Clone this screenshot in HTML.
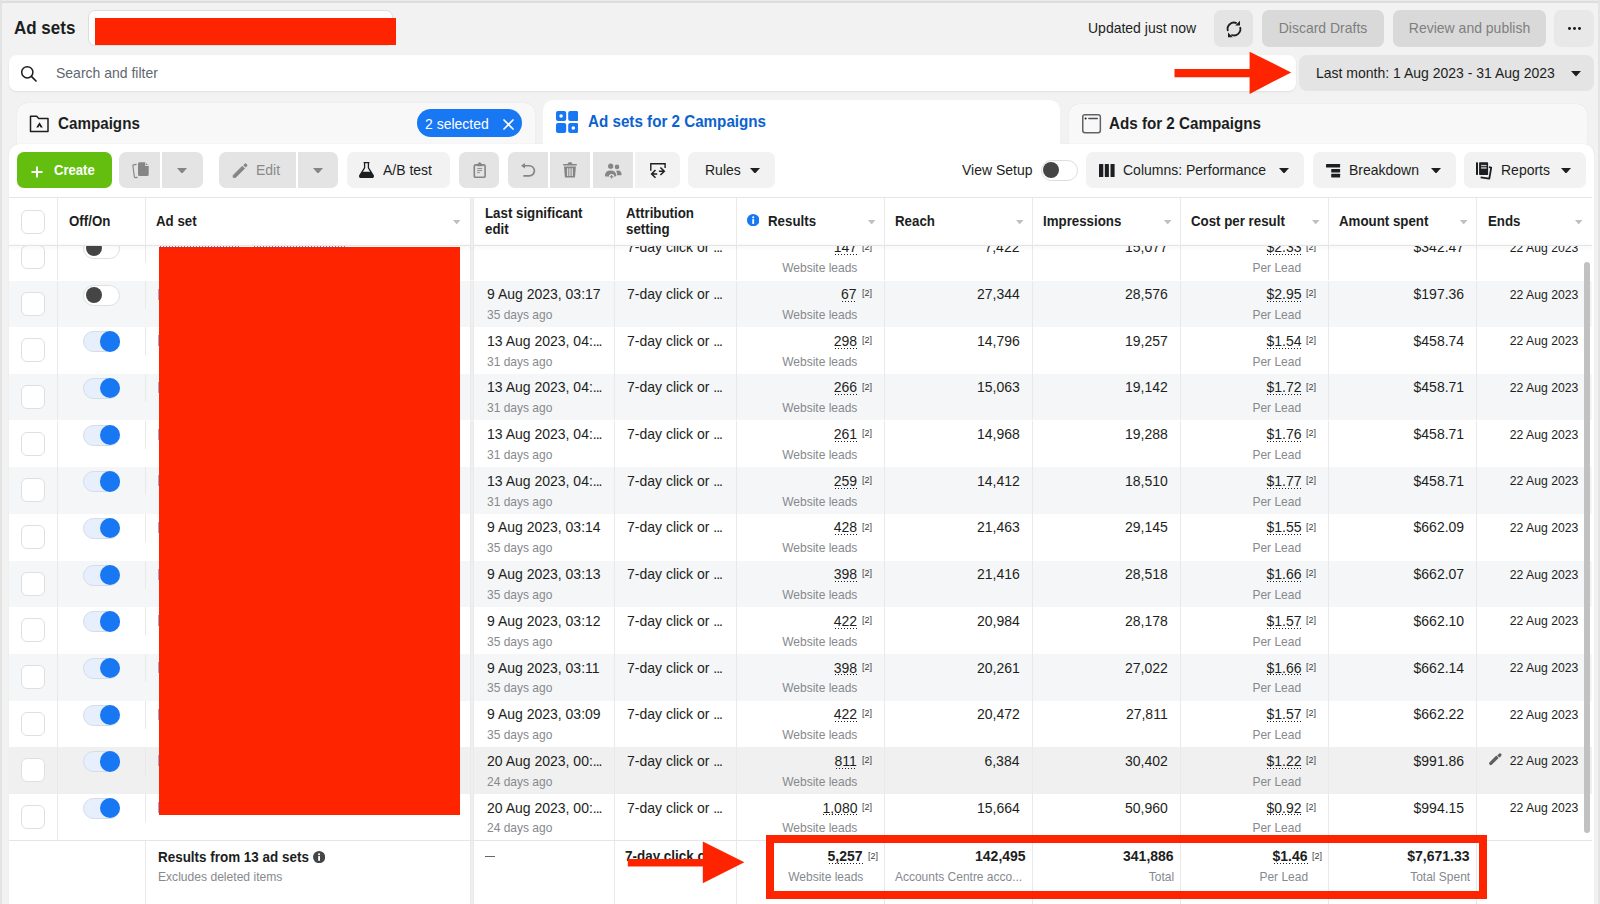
<!DOCTYPE html><html><head><meta charset="utf-8"><style>
*{margin:0;padding:0;box-sizing:border-box}
html,body{width:1600px;height:904px;overflow:hidden}
body{background:#f2f2f2;font-family:"Liberation Sans",sans-serif;position:relative}
.t{position:absolute;white-space:nowrap}
.r{position:absolute;display:block}
</style></head><body>
<div class="r" style="left:0.00px;top:0.00px;width:1600.00px;height:1.00px;background:#ebebeb;"></div>
<div class="r" style="left:0.00px;top:1.00px;width:1600.00px;height:1.60px;background:#dcdede;"></div>
<div class="r" style="left:0.00px;top:0.00px;width:2.00px;height:904.00px;background:#e2e2e2;"></div>
<div class="r" style="left:1598.00px;top:0.00px;width:2.00px;height:904.00px;background:#e4e4e4;"></div>
<div class="t" style="top:15.90px;font-size:19.04px;line-height:23.8px;font-weight:700;color:#1c1e21;transform:scaleX(0.8929);left:14.00px;transform-origin:0 50%;">Ad sets</div>
<div class="r" style="left:88.00px;top:10.00px;width:305.00px;height:36.00px;background:#fff;border:1px solid #dadde1;border-radius:7px;"></div>
<div class="r" style="left:95.00px;top:17.60px;width:301.00px;height:27.20px;background:#ff2400;"></div>
<div class="t" style="top:19.04px;font-size:14.98px;line-height:18.73px;font-weight:400;color:#1c1e21;transform:scaleX(0.9346);left:1087.60px;transform-origin:0 50%;">Updated just now</div>
<div class="r" style="left:1213.60px;top:10.00px;width:39.90px;height:36.60px;background:#e4e4e4;border-radius:7px;"></div>
<svg class="r" style="left:1223.90px;top:18.80px;" width="20" height="20" viewBox="0 0 20 20"><path d="M3.9 12A6.4 6.4 0 0 1 12.7 4.2M16.1 8.1A6.4 6.4 0 0 1 7.3 15.8" fill="none" stroke="#1c1e21" stroke-width="1.8"/><path d="M11.2 6.6H16V1.8z" fill="#1c1e21"/><path d="M4 13.4V18.2H8.8z" fill="#1c1e21"/></svg>
<div class="r" style="left:1262.00px;top:10.00px;width:122.00px;height:36.60px;background:#d9d9d9;border-radius:7px;"></div>
<div class="t" style="top:19.04px;font-size:14.98px;line-height:18.73px;font-weight:400;color:#7f7f7f;transform:scaleX(0.9346);left:1262.00px;width:122px;text-align:center;transform-origin:50% 50%;">Discard Drafts</div>
<div class="r" style="left:1393.00px;top:10.00px;width:153.00px;height:36.60px;background:#d9d9d9;border-radius:7px;"></div>
<div class="t" style="top:19.04px;font-size:14.98px;line-height:18.73px;font-weight:400;color:#7f7f7f;transform:scaleX(0.9346);left:1393.00px;width:153px;text-align:center;transform-origin:50% 50%;">Review and publish</div>
<div class="r" style="left:1554.00px;top:10.00px;width:40.00px;height:36.60px;background:#e8e8e8;border-radius:7px;"></div>
<div class="r" style="left:1567.75px;top:27.05px;width:2.90px;height:2.90px;background:#1c1e21;border-radius:50%;"></div>
<div class="r" style="left:1572.90px;top:27.05px;width:2.90px;height:2.90px;background:#1c1e21;border-radius:50%;"></div>
<div class="r" style="left:1578.05px;top:27.05px;width:2.90px;height:2.90px;background:#1c1e21;border-radius:50%;"></div>
<div class="r" style="left:9.00px;top:55.00px;width:1286.50px;height:36.00px;background:#fff;border-radius:8px;box-shadow:0 1px 2px rgba(0,0,0,0.08);"></div>
<svg class="r" style="left:20.00px;top:64.60px;" width="18" height="18" viewBox="0 0 18 18"><circle cx="7.3" cy="7.3" r="5.6" fill="none" stroke="#1c1e21" stroke-width="1.5"/><path d="M11.4 11.4l4.6 4.6" stroke="#1c1e21" stroke-width="1.7" stroke-linecap="round"/></svg>
<div class="t" style="top:63.54px;font-size:14.98px;line-height:18.73px;font-weight:400;color:#606770;transform:scaleX(0.9346);left:55.50px;transform-origin:0 50%;">Search and filter</div>
<div class="r" style="left:1299.40px;top:55.00px;width:294.60px;height:36.00px;background:#e4e4e4;border-radius:8px;"></div>
<div class="t" style="top:63.54px;font-size:14.98px;line-height:18.73px;font-weight:400;color:#1c1e21;transform:scaleX(0.9346);left:1315.50px;transform-origin:0 50%;">Last month: 1 Aug 2023 - 31 Aug 2023</div>
<svg class="r" style="left:1571.40px;top:71.25px;" width="10" height="5.5" viewBox="0 0 10 5.5"><path d="M0 0H10L5.0 5.5Z" fill="#1c1e21"/></svg>
<svg class="r" style="left:1174.00px;top:51.00px;" width="118" height="43" viewBox="0 0 118 43"><path d="M0.5 18H75.6V0.7L117.2 21.4L75.6 42.9V26.2H0.5Z" fill="#ff2400"/></svg>
<div class="r" style="left:17.00px;top:103.00px;width:518.00px;height:47.00px;background:#f8f8f8;border-radius:10px 10px 0 0;box-shadow:0 0 1px rgba(0,0,0,0.12);"></div>
<svg class="r" style="left:29.00px;top:114.00px;" width="21" height="19" viewBox="0 0 21 19"><path d="M1.5 2.2h6.2l2 2.2h9.3v13H1.5z" fill="none" stroke="#1c1e21" stroke-width="1.5" stroke-linejoin="round"/><path d="M7.2 13.6l3.3-5.4 3.3 5.4h-2.2l-1.1-2-1.1 2z" fill="#1c1e21"/></svg>
<div class="t" style="top:113.96px;font-size:16.72px;line-height:20.9px;font-weight:700;color:#1c1e21;transform:scaleX(0.9091);left:57.50px;transform-origin:0 50%;">Campaigns</div>
<div class="r" style="left:417.00px;top:109.30px;width:105.00px;height:28.10px;background:#1877f2;border-radius:14px;"></div>
<div class="t" style="top:114.74px;font-size:14.98px;line-height:18.73px;font-weight:400;color:#fff;transform:scaleX(0.9346);left:425.00px;transform-origin:0 50%;">2 selected</div>
<svg class="r" style="left:502.80px;top:119.40px;" width="11" height="11" viewBox="0 0 11 11"><path d="M1 1l9 9M10 1l-9 9" stroke="#fff" stroke-width="1.7" stroke-linecap="round"/></svg>
<div class="r" style="left:1068.50px;top:103.50px;width:518.00px;height:46.50px;background:#f8f8f8;border-radius:10px 10px 0 0;box-shadow:0 0 1px rgba(0,0,0,0.12);"></div>
<svg class="r" style="left:1080.50px;top:113.00px;" width="21" height="21" viewBox="0 0 21 21"><rect x="1.75" y="1.85" width="17.6" height="17.8" rx="2.2" fill="none" stroke="#606266" stroke-width="1.5"/><path d="M7.8 5.5h8.6" stroke="#4a4c50" stroke-width="1.3" stroke-linecap="round"/><circle cx="4.6" cy="5.5" r="1.05" fill="#1c1e21"/></svg>
<div class="t" style="top:113.96px;font-size:16.72px;line-height:20.9px;font-weight:700;color:#1c1e21;transform:scaleX(0.9091);left:1109.00px;transform-origin:0 50%;">Ads for 2 Campaigns</div>
<div class="r" style="left:8.50px;top:144.00px;width:1585.50px;height:776.00px;background:#fff;border-radius:10px 10px 0 0;box-shadow:0 0 1px rgba(0,0,0,0.15);"></div>
<div class="r" style="left:542.50px;top:100.00px;width:517.50px;height:60.00px;background:#fff;border-radius:10px 10px 0 0;"></div>
<svg class="r" style="left:555.80px;top:111.00px;" width="22.4" height="22" viewBox="0 0 22.4 22"><rect x="0" y="0" width="10.2" height="10" rx="2" fill="#1877f2"/><rect x="12.2" y="0" width="10.2" height="10" rx="2" fill="#1877f2"/><rect x="0" y="12" width="10.2" height="10" rx="2" fill="#1877f2"/><rect x="12.2" y="12" width="10.2" height="10" rx="2" fill="#1877f2"/><circle cx="5.1" cy="5" r="1.8" fill="#fff"/><circle cx="17.3" cy="17" r="1.8" fill="#fff"/></svg>
<div class="t" style="top:112.16px;font-size:16.72px;line-height:20.9px;font-weight:700;color:#0b62cf;transform:scaleX(0.9091);left:587.50px;transform-origin:0 50%;">Ad sets for 2 Campaigns</div>
<div class="r" style="left:17.00px;top:152.00px;width:94.50px;height:36.00px;background:#63be0f;border-radius:7px;"></div>
<svg class="r" style="left:31.00px;top:165.50px;" width="12" height="12" viewBox="0 0 12 12"><path d="M6 0.5v11M0.5 6h11" stroke="#fff" stroke-width="1.9"/></svg>
<div class="t" style="top:161.36px;font-size:15.06px;line-height:18.83px;font-weight:700;color:#fff;transform:scaleX(0.8696);left:53.50px;transform-origin:0 50%;">Create</div>
<div class="r" style="left:119.30px;top:152.00px;width:40.70px;height:36.00px;background:#e4e4e4;border-radius:7px 0 0 7px;"></div>
<svg class="r" style="left:131.50px;top:162.00px;" width="17" height="17" viewBox="0 0 17 17"><path d="M4.6 2.4L1.6 2.9Q0.8 3.1 0.9 3.9L2.4 14.9Q2.5 15.6 3.3 15.6L5.6 15.4" fill="none" stroke="#858585" stroke-width="1.1"/><path d="M7.6 0.3h5.6l3.5 3.5v8.7a1.6 1.6 0 0 1-1.6 1.6H7.6a1.6 1.6 0 0 1-1.6-1.6V1.9a1.6 1.6 0 0 1 1.6-1.6z" fill="#858585"/><path d="M13.2 0.1v3.8h3.7z" fill="#e4e4e4"/><path d="M13.9 1.2l1.9 1.9h-1.9z" fill="#858585"/></svg>
<div class="r" style="left:162.20px;top:152.00px;width:40.50px;height:36.00px;background:#e4e4e4;border-radius:0 7px 7px 0;"></div>
<svg class="r" style="left:177.40px;top:167.55px;" width="10" height="5.7" viewBox="0 0 10 5.7"><path d="M0 0H10L5.0 5.7Z" fill="#858585"/></svg>
<div class="r" style="left:219.20px;top:152.00px;width:76.50px;height:36.00px;background:#e4e4e4;border-radius:7px 0 0 7px;"></div>
<svg class="r" style="left:231.50px;top:162.50px;" width="16" height="15" viewBox="0 0 16 15"><path d="M1 14.3L1.3 12.2 10.3 3.2 12.6 5.5 3.6 14.5z" fill="#858585" stroke="#858585" stroke-width="0.8" stroke-linejoin="round"/><path d="M11.3 2.2l1.6-1.6a0.8 0.8 0 0 1 1.1 0l1.2 1.2a0.8 0.8 0 0 1 0 1.1l-1.6 1.6z" fill="#858585"/></svg>
<div class="t" style="top:160.94px;font-size:14.98px;line-height:18.73px;font-weight:400;color:#8a8a8a;transform:scaleX(0.9346);left:256.25px;transform-origin:0 50%;">Edit</div>
<div class="r" style="left:297.50px;top:152.00px;width:40.50px;height:36.00px;background:#e4e4e4;border-radius:0 7px 7px 0;"></div>
<svg class="r" style="left:313.10px;top:167.55px;" width="10" height="5.7" viewBox="0 0 10 5.7"><path d="M0 0H10L5.0 5.7Z" fill="#858585"/></svg>
<div class="r" style="left:346.75px;top:152.00px;width:103.50px;height:36.00px;background:#f2f2f2;border-radius:7px;"></div>
<svg class="r" style="left:359.00px;top:162.00px;" width="15" height="16" viewBox="0 0 15 16"><path d="M4.6 0.6h5.8M5.6 0.6v5.2L0.9 13.4a1.5 1.5 0 0 0 1.3 2.2h10.6a1.5 1.5 0 0 0 1.3-2.2L9.4 5.8V0.6" fill="none" stroke="#1c1e21" stroke-width="1.3"/><path d="M3.2 9.8h8.6l2.6 3.9a1.4 1.4 0 0 1-1.2 1.9H1.8a1.4 1.4 0 0 1-1.2-1.9z" fill="#1c1e21"/></svg>
<div class="t" style="top:160.94px;font-size:14.98px;line-height:18.73px;font-weight:400;color:#1c1e21;transform:scaleX(0.9346);left:383.20px;transform-origin:0 50%;">A/B test</div>
<div class="r" style="left:458.80px;top:152.00px;width:39.90px;height:36.00px;background:#e4e4e4;border-radius:7px;"></div>
<svg class="r" style="left:472.50px;top:161.90px;" width="13" height="16" viewBox="0 0 13 16"><rect x="1.3" y="2.9" width="10.8" height="12.4" rx="1.4" fill="none" stroke="#858585" stroke-width="1.6"/><path d="M3.9 4.2V2.6L6.7 0L9.5 2.6V4.2z" fill="#858585"/><path d="M4.2 6.6h5M4.2 8.6h5M4.2 10.6h2.6" stroke="#858585" stroke-width="0.9"/></svg>
<div class="r" style="left:508.00px;top:152.00px;width:39.75px;height:36.00px;background:#e4e4e4;border-radius:7px 0 0 7px;"></div>
<svg class="r" style="left:520.50px;top:161.80px;" width="15" height="16" viewBox="0 0 15 16"><path d="M0 3.75L4 0.9V6.6z" fill="#858585"/><path d="M3.4 3.75H8.35A5.05 5.05 0 0 1 8.35 13.85H2.3" fill="none" stroke="#858585" stroke-width="1.7"/></svg>
<div class="r" style="left:550.00px;top:152.00px;width:40.20px;height:36.00px;background:#e4e4e4;"></div>
<svg class="r" style="left:563.30px;top:162.10px;" width="14" height="16" viewBox="0 0 14 16"><path d="M4.4 2.6Q4.6 0 7 0Q9.4 0 9.6 2.6z" fill="#858585"/><rect x="0" y="2.1" width="13.9" height="1.4" rx="0.6" fill="#858585"/><path d="M1 4.5H12.9L12 15.2Q11.9 15.6 11.5 15.6H2.4Q2 15.6 1.9 15.2z" fill="#858585"/><path d="M4.7 6.2v7.8M6.95 6.2v7.8M9.2 6.2v7.8" stroke="#e4e4e4" stroke-width="1.2"/></svg>
<div class="r" style="left:593.00px;top:152.00px;width:39.80px;height:36.00px;background:#e4e4e4;"></div>
<svg class="r" style="left:604.50px;top:162.50px;" width="17" height="18" viewBox="0 0 17 18"><circle cx="5.7" cy="3.2" r="2.6" fill="#858585"/><circle cx="12" cy="3.9" r="2.3" fill="#858585"/><path d="M-0.1 12.6Q0.2 7.6 5.7 7.5Q11 7.6 11.4 12.6Q11.2 13.6 10 13.6H1.2Q0 13.6 -0.1 12.6z" fill="#858585"/><path d="M11.2 7.7Q12.1 7.4 13.2 7.5Q16.6 7.8 16.6 11.6Q16.5 12.3 15.8 12.3H12.2Q12 9.6 11.2 7.7z" fill="#858585"/><circle cx="6.6" cy="13.8" r="2.7" fill="#e4e4e4"/><path d="M6.6 12v3.6M4.8 13.8h3.6" stroke="#858585" stroke-width="1.1"/></svg>
<div class="r" style="left:635.20px;top:152.00px;width:44.55px;height:36.00px;background:#f2f2f2;border-radius:0 7px 7px 0;"></div>
<svg class="r" style="left:649.50px;top:162.50px;" width="16" height="16" viewBox="0 0 16 16"><path d="M0.8 7.7V0.7H15.1V5.1" fill="none" stroke="#1c1e21" stroke-width="1.4"/><path d="M5.5 7L1.6 11L5.5 14.8M1.8 11H7.2M10.4 4.5L14.3 8.2L10.4 12M14.1 8.2H8.9" fill="none" stroke="#1c1e21" stroke-width="1.5"/></svg>
<div class="r" style="left:688.30px;top:152.00px;width:86.70px;height:36.00px;background:#f2f2f2;border-radius:7px;"></div>
<div class="t" style="top:160.94px;font-size:14.98px;line-height:18.73px;font-weight:400;color:#1c1e21;transform:scaleX(0.9346);left:704.50px;transform-origin:0 50%;">Rules</div>
<svg class="r" style="left:750.10px;top:167.70px;" width="10" height="5.6" viewBox="0 0 10 5.6"><path d="M0 0H10L5.0 5.6Z" fill="#1c1e21"/></svg>
<div class="t" style="top:160.94px;font-size:14.98px;line-height:18.73px;font-weight:400;color:#1c1e21;transform:scaleX(0.9346);left:962.00px;transform-origin:0 50%;">View Setup</div>
<div class="r" style="left:1040.50px;top:159.50px;width:37.50px;height:21.00px;background:#fff;border:1px solid #dadde1;border-radius:11px;"></div>
<div class="r" style="left:1043.00px;top:162.00px;width:16.00px;height:16.00px;background:#454545;border-radius:50%;"></div>
<div class="r" style="left:1086.30px;top:152.00px;width:217.40px;height:36.00px;background:#f2f2f2;border-radius:7px;"></div>
<svg class="r" style="left:1098.60px;top:163.80px;" width="16" height="13" viewBox="0 0 16 13"><rect x="0" y="0" width="4.3" height="13" rx="0.5" fill="#1c1e21"/><rect x="5.8" y="0" width="4.1" height="13" rx="0.5" fill="#1c1e21"/><rect x="11.5" y="0" width="4.1" height="13" rx="0.5" fill="#1c1e21"/></svg>
<div class="t" style="top:160.94px;font-size:14.98px;line-height:18.73px;font-weight:400;color:#1c1e21;transform:scaleX(0.9346);left:1123.10px;transform-origin:0 50%;">Columns: Performance</div>
<svg class="r" style="left:1279.40px;top:167.70px;" width="10" height="5.6" viewBox="0 0 10 5.6"><path d="M0 0H10L5.0 5.6Z" fill="#1c1e21"/></svg>
<div class="r" style="left:1313.00px;top:152.00px;width:142.50px;height:36.00px;background:#f2f2f2;border-radius:7px;"></div>
<svg class="r" style="left:1325.80px;top:163.50px;" width="15" height="14" viewBox="0 0 15 14"><rect x="0" y="0" width="14.1" height="3.4" rx="0.4" fill="#1c1e21"/><rect x="5.2" y="5.1" width="8.9" height="3.3" rx="0.4" fill="#1c1e21"/><rect x="5.2" y="9.8" width="8.9" height="3.7" rx="0.4" fill="#1c1e21"/></svg>
<div class="t" style="top:160.94px;font-size:14.98px;line-height:18.73px;font-weight:400;color:#1c1e21;transform:scaleX(0.9346);left:1349.20px;transform-origin:0 50%;">Breakdown</div>
<svg class="r" style="left:1430.70px;top:167.70px;" width="10" height="5.6" viewBox="0 0 10 5.6"><path d="M0 0H10L5.0 5.6Z" fill="#1c1e21"/></svg>
<div class="r" style="left:1464.30px;top:152.00px;width:121.50px;height:36.00px;background:#f2f2f2;border-radius:7px;"></div>
<svg class="r" style="left:1476.00px;top:162.00px;" width="17" height="18" viewBox="0 0 17 18"><rect x="0" y="0.3" width="2" height="12.6" rx="0.6" fill="#1c1e21"/><rect x="3.1" y="0.3" width="9" height="12.6" rx="0.6" fill="#1c1e21"/><rect x="5" y="2.9" width="5.6" height="1.3" fill="#c4c4c4"/><rect x="5" y="5.1" width="5.6" height="1.7" fill="#b0b0b0"/><path d="M12.9 5.2L15.2 5.6L13.3 16.6L4.6 15.3" fill="none" stroke="#1c1e21" stroke-width="1.8" stroke-linejoin="round"/></svg>
<div class="t" style="top:160.94px;font-size:14.98px;line-height:18.73px;font-weight:400;color:#1c1e21;transform:scaleX(0.9346);left:1500.75px;transform-origin:0 50%;">Reports</div>
<svg class="r" style="left:1561.30px;top:167.70px;" width="10" height="5.6" viewBox="0 0 10 5.6"><path d="M0 0H10L5.0 5.6Z" fill="#1c1e21"/></svg>
<div class="r" style="left:56.80px;top:233.83px;width:1.00px;height:46.67px;background:#e9e9ea;"></div>
<div class="r" style="left:469.70px;top:233.83px;width:1.00px;height:46.67px;background:#e9e9ea;"></div>
<div class="r" style="left:473.30px;top:233.83px;width:1.00px;height:46.67px;background:#e9e9ea;"></div>
<div class="r" style="left:614.00px;top:233.83px;width:1.00px;height:46.67px;background:#e9e9ea;"></div>
<div class="r" style="left:736.00px;top:233.83px;width:1.00px;height:46.67px;background:#e9e9ea;"></div>
<div class="r" style="left:883.80px;top:233.83px;width:1.00px;height:46.67px;background:#e9e9ea;"></div>
<div class="r" style="left:1032.00px;top:233.83px;width:1.00px;height:46.67px;background:#e9e9ea;"></div>
<div class="r" style="left:1180.00px;top:233.83px;width:1.00px;height:46.67px;background:#e9e9ea;"></div>
<div class="r" style="left:1328.10px;top:233.83px;width:1.00px;height:46.67px;background:#e9e9ea;"></div>
<div class="r" style="left:1475.90px;top:233.83px;width:1.00px;height:46.67px;background:#e9e9ea;"></div>
<div class="r" style="left:144.80px;top:233.83px;width:1.00px;height:28.00px;background:#e9e9ea;"></div>
<div class="r" style="left:20.70px;top:245.03px;width:24.10px;height:24.00px;background:#fff;border:1px solid #dddfe2;border-radius:6px;"></div>
<div class="r" style="left:83.00px;top:237.83px;width:36.50px;height:21.00px;background:#fff;border:1px solid #dddfe2;border-radius:11px;"></div>
<div class="r" style="left:85.60px;top:240.23px;width:16.20px;height:16.20px;background:#454545;border-radius:50%;"></div>
<div class="t" style="top:238.47px;font-size:14.98px;line-height:18.73px;font-weight:400;color:#1c1e21;transform:scaleX(0.9346);left:626.80px;transform-origin:0 50%;">7-day click or <span style="letter-spacing:-1.1px">...</span></div>
<div class="t" style="top:238.47px;font-size:14.98px;line-height:18.73px;font-weight:400;color:#1c1e21;transform:scaleX(0.9346);right:743.00px;text-align:right;transform-origin:100% 50%;">147</div>
<div class="r" style="left:833.64px;top:254.43px;width:23.36px;height:1.40px;background:transparent;background-image:radial-gradient(circle,#1c1e21 0.75px,transparent 0.95px);background-size:3px 1.4px;background-repeat:repeat-x;"></div>
<div class="t" style="top:240.67px;font-size:9.63px;line-height:12.04px;font-weight:400;color:#3a3b3e;transform:scaleX(0.9346);left:862.00px;transform-origin:0 50%;">[2]</div>
<div class="t" style="top:260.16px;font-size:12.84px;line-height:16.05px;font-weight:400;color:#86898d;transform:scaleX(0.9346);right:742.60px;text-align:right;transform-origin:100% 50%;">Website leads</div>
<div class="t" style="top:238.47px;font-size:14.98px;line-height:18.73px;font-weight:400;color:#1c1e21;transform:scaleX(0.9346);right:580.50px;text-align:right;transform-origin:100% 50%;">7,422</div>
<div class="t" style="top:238.47px;font-size:14.98px;line-height:18.73px;font-weight:400;color:#1c1e21;transform:scaleX(0.9346);right:432.40px;text-align:right;transform-origin:100% 50%;">15,077</div>
<div class="t" style="top:238.47px;font-size:14.98px;line-height:18.73px;font-weight:400;color:#1c1e21;transform:scaleX(0.9346);right:298.70px;text-align:right;transform-origin:100% 50%;">$2.33</div>
<div class="r" style="left:1266.27px;top:254.43px;width:35.03px;height:1.40px;background:transparent;background-image:radial-gradient(circle,#1c1e21 0.75px,transparent 0.95px);background-size:3px 1.4px;background-repeat:repeat-x;"></div>
<div class="t" style="top:240.67px;font-size:9.63px;line-height:12.04px;font-weight:400;color:#3a3b3e;transform:scaleX(0.9346);left:1306.30px;transform-origin:0 50%;">[2]</div>
<div class="t" style="top:260.16px;font-size:12.84px;line-height:16.05px;font-weight:400;color:#86898d;transform:scaleX(0.9346);right:298.70px;text-align:right;transform-origin:100% 50%;">Per Lead</div>
<div class="t" style="top:238.47px;font-size:14.98px;line-height:18.73px;font-weight:400;color:#1c1e21;transform:scaleX(0.9346);right:136.00px;text-align:right;transform-origin:100% 50%;">$342.47</div>
<div class="t" style="top:239.85px;font-size:13.05px;line-height:16.32px;font-weight:400;color:#1c1e21;transform:scaleX(0.9346);right:22.00px;text-align:right;transform-origin:100% 50%;">22 Aug 2023</div>
<div class="r" style="left:8.50px;top:280.50px;width:1583.50px;height:46.67px;background:#f5f6f7;"></div>
<div class="r" style="left:56.80px;top:280.50px;width:1.00px;height:46.67px;background:#e9e9ea;"></div>
<div class="r" style="left:469.70px;top:280.50px;width:1.00px;height:46.67px;background:#e9e9ea;"></div>
<div class="r" style="left:473.30px;top:280.50px;width:1.00px;height:46.67px;background:#e9e9ea;"></div>
<div class="r" style="left:614.00px;top:280.50px;width:1.00px;height:46.67px;background:#e9e9ea;"></div>
<div class="r" style="left:736.00px;top:280.50px;width:1.00px;height:46.67px;background:#e9e9ea;"></div>
<div class="r" style="left:883.80px;top:280.50px;width:1.00px;height:46.67px;background:#e9e9ea;"></div>
<div class="r" style="left:1032.00px;top:280.50px;width:1.00px;height:46.67px;background:#e9e9ea;"></div>
<div class="r" style="left:1180.00px;top:280.50px;width:1.00px;height:46.67px;background:#e9e9ea;"></div>
<div class="r" style="left:1328.10px;top:280.50px;width:1.00px;height:46.67px;background:#e9e9ea;"></div>
<div class="r" style="left:1475.90px;top:280.50px;width:1.00px;height:46.67px;background:#e9e9ea;"></div>
<div class="r" style="left:144.80px;top:280.50px;width:1.00px;height:28.00px;background:#e9e9ea;"></div>
<div class="r" style="left:20.70px;top:291.70px;width:24.10px;height:24.00px;background:#fff;border:1px solid #dddfe2;border-radius:6px;"></div>
<div class="r" style="left:83.00px;top:284.50px;width:36.50px;height:21.00px;background:#fff;border:1px solid #dddfe2;border-radius:11px;"></div>
<div class="r" style="left:85.60px;top:286.90px;width:16.20px;height:16.20px;background:#454545;border-radius:50%;"></div>
<div class="t" style="top:285.14px;font-size:14.98px;line-height:18.73px;font-weight:400;color:#1c1e21;transform:scaleX(0.9346);left:486.50px;transform-origin:0 50%;">9 Aug 2023, 03:17</div>
<div class="t" style="top:306.83px;font-size:12.84px;line-height:16.05px;font-weight:400;color:#86898d;transform:scaleX(0.9346);left:486.50px;transform-origin:0 50%;">35 days ago</div>
<div class="t" style="top:285.14px;font-size:14.98px;line-height:18.73px;font-weight:400;color:#1c1e21;transform:scaleX(0.9346);left:626.80px;transform-origin:0 50%;">7-day click or <span style="letter-spacing:-1.1px">...</span></div>
<div class="t" style="top:285.14px;font-size:14.98px;line-height:18.73px;font-weight:400;color:#1c1e21;transform:scaleX(0.9346);right:743.00px;text-align:right;transform-origin:100% 50%;">67</div>
<div class="r" style="left:841.43px;top:301.10px;width:15.57px;height:1.40px;background:transparent;background-image:radial-gradient(circle,#1c1e21 0.75px,transparent 0.95px);background-size:3px 1.4px;background-repeat:repeat-x;"></div>
<div class="t" style="top:287.34px;font-size:9.63px;line-height:12.04px;font-weight:400;color:#3a3b3e;transform:scaleX(0.9346);left:862.00px;transform-origin:0 50%;">[2]</div>
<div class="t" style="top:306.83px;font-size:12.84px;line-height:16.05px;font-weight:400;color:#86898d;transform:scaleX(0.9346);right:742.60px;text-align:right;transform-origin:100% 50%;">Website leads</div>
<div class="t" style="top:285.14px;font-size:14.98px;line-height:18.73px;font-weight:400;color:#1c1e21;transform:scaleX(0.9346);right:580.50px;text-align:right;transform-origin:100% 50%;">27,344</div>
<div class="t" style="top:285.14px;font-size:14.98px;line-height:18.73px;font-weight:400;color:#1c1e21;transform:scaleX(0.9346);right:432.40px;text-align:right;transform-origin:100% 50%;">28,576</div>
<div class="t" style="top:285.14px;font-size:14.98px;line-height:18.73px;font-weight:400;color:#1c1e21;transform:scaleX(0.9346);right:298.70px;text-align:right;transform-origin:100% 50%;">$2.95</div>
<div class="r" style="left:1266.27px;top:301.10px;width:35.03px;height:1.40px;background:transparent;background-image:radial-gradient(circle,#1c1e21 0.75px,transparent 0.95px);background-size:3px 1.4px;background-repeat:repeat-x;"></div>
<div class="t" style="top:287.34px;font-size:9.63px;line-height:12.04px;font-weight:400;color:#3a3b3e;transform:scaleX(0.9346);left:1306.30px;transform-origin:0 50%;">[2]</div>
<div class="t" style="top:306.83px;font-size:12.84px;line-height:16.05px;font-weight:400;color:#86898d;transform:scaleX(0.9346);right:298.70px;text-align:right;transform-origin:100% 50%;">Per Lead</div>
<div class="t" style="top:285.14px;font-size:14.98px;line-height:18.73px;font-weight:400;color:#1c1e21;transform:scaleX(0.9346);right:136.00px;text-align:right;transform-origin:100% 50%;">$197.36</div>
<div class="t" style="top:286.52px;font-size:13.05px;line-height:16.32px;font-weight:400;color:#1c1e21;transform:scaleX(0.9346);right:22.00px;text-align:right;transform-origin:100% 50%;">22 Aug 2023</div>
<div class="r" style="left:56.80px;top:327.17px;width:1.00px;height:46.67px;background:#e9e9ea;"></div>
<div class="r" style="left:469.70px;top:327.17px;width:1.00px;height:46.67px;background:#e9e9ea;"></div>
<div class="r" style="left:473.30px;top:327.17px;width:1.00px;height:46.67px;background:#e9e9ea;"></div>
<div class="r" style="left:614.00px;top:327.17px;width:1.00px;height:46.67px;background:#e9e9ea;"></div>
<div class="r" style="left:736.00px;top:327.17px;width:1.00px;height:46.67px;background:#e9e9ea;"></div>
<div class="r" style="left:883.80px;top:327.17px;width:1.00px;height:46.67px;background:#e9e9ea;"></div>
<div class="r" style="left:1032.00px;top:327.17px;width:1.00px;height:46.67px;background:#e9e9ea;"></div>
<div class="r" style="left:1180.00px;top:327.17px;width:1.00px;height:46.67px;background:#e9e9ea;"></div>
<div class="r" style="left:1328.10px;top:327.17px;width:1.00px;height:46.67px;background:#e9e9ea;"></div>
<div class="r" style="left:1475.90px;top:327.17px;width:1.00px;height:46.67px;background:#e9e9ea;"></div>
<div class="r" style="left:144.80px;top:327.17px;width:1.00px;height:28.00px;background:#e9e9ea;"></div>
<div class="r" style="left:20.70px;top:338.37px;width:24.10px;height:24.00px;background:#fff;border:1px solid #dddfe2;border-radius:6px;"></div>
<div class="r" style="left:83.00px;top:331.17px;width:36.50px;height:21.00px;background:#e7effc;border:1px solid #d4dcea;border-radius:11px;"></div>
<div class="r" style="left:99.60px;top:331.37px;width:20.40px;height:20.40px;background:#1877f2;border-radius:50%;"></div>
<div class="t" style="top:331.81px;font-size:14.98px;line-height:18.73px;font-weight:400;color:#1c1e21;transform:scaleX(0.9346);left:486.50px;transform-origin:0 50%;">13 Aug 2023, 04:<span style="letter-spacing:-1.1px">...</span></div>
<div class="t" style="top:353.50px;font-size:12.84px;line-height:16.05px;font-weight:400;color:#86898d;transform:scaleX(0.9346);left:486.50px;transform-origin:0 50%;">31 days ago</div>
<div class="t" style="top:331.81px;font-size:14.98px;line-height:18.73px;font-weight:400;color:#1c1e21;transform:scaleX(0.9346);left:626.80px;transform-origin:0 50%;">7-day click or <span style="letter-spacing:-1.1px">...</span></div>
<div class="t" style="top:331.81px;font-size:14.98px;line-height:18.73px;font-weight:400;color:#1c1e21;transform:scaleX(0.9346);right:743.00px;text-align:right;transform-origin:100% 50%;">298</div>
<div class="r" style="left:833.64px;top:347.77px;width:23.36px;height:1.40px;background:transparent;background-image:radial-gradient(circle,#1c1e21 0.75px,transparent 0.95px);background-size:3px 1.4px;background-repeat:repeat-x;"></div>
<div class="t" style="top:334.01px;font-size:9.63px;line-height:12.04px;font-weight:400;color:#3a3b3e;transform:scaleX(0.9346);left:862.00px;transform-origin:0 50%;">[2]</div>
<div class="t" style="top:353.50px;font-size:12.84px;line-height:16.05px;font-weight:400;color:#86898d;transform:scaleX(0.9346);right:742.60px;text-align:right;transform-origin:100% 50%;">Website leads</div>
<div class="t" style="top:331.81px;font-size:14.98px;line-height:18.73px;font-weight:400;color:#1c1e21;transform:scaleX(0.9346);right:580.50px;text-align:right;transform-origin:100% 50%;">14,796</div>
<div class="t" style="top:331.81px;font-size:14.98px;line-height:18.73px;font-weight:400;color:#1c1e21;transform:scaleX(0.9346);right:432.40px;text-align:right;transform-origin:100% 50%;">19,257</div>
<div class="t" style="top:331.81px;font-size:14.98px;line-height:18.73px;font-weight:400;color:#1c1e21;transform:scaleX(0.9346);right:298.70px;text-align:right;transform-origin:100% 50%;">$1.54</div>
<div class="r" style="left:1266.27px;top:347.77px;width:35.03px;height:1.40px;background:transparent;background-image:radial-gradient(circle,#1c1e21 0.75px,transparent 0.95px);background-size:3px 1.4px;background-repeat:repeat-x;"></div>
<div class="t" style="top:334.01px;font-size:9.63px;line-height:12.04px;font-weight:400;color:#3a3b3e;transform:scaleX(0.9346);left:1306.30px;transform-origin:0 50%;">[2]</div>
<div class="t" style="top:353.50px;font-size:12.84px;line-height:16.05px;font-weight:400;color:#86898d;transform:scaleX(0.9346);right:298.70px;text-align:right;transform-origin:100% 50%;">Per Lead</div>
<div class="t" style="top:331.81px;font-size:14.98px;line-height:18.73px;font-weight:400;color:#1c1e21;transform:scaleX(0.9346);right:136.00px;text-align:right;transform-origin:100% 50%;">$458.74</div>
<div class="t" style="top:333.19px;font-size:13.05px;line-height:16.32px;font-weight:400;color:#1c1e21;transform:scaleX(0.9346);right:22.00px;text-align:right;transform-origin:100% 50%;">22 Aug 2023</div>
<div class="r" style="left:8.50px;top:373.84px;width:1583.50px;height:46.67px;background:#f5f6f7;"></div>
<div class="r" style="left:56.80px;top:373.84px;width:1.00px;height:46.67px;background:#e9e9ea;"></div>
<div class="r" style="left:469.70px;top:373.84px;width:1.00px;height:46.67px;background:#e9e9ea;"></div>
<div class="r" style="left:473.30px;top:373.84px;width:1.00px;height:46.67px;background:#e9e9ea;"></div>
<div class="r" style="left:614.00px;top:373.84px;width:1.00px;height:46.67px;background:#e9e9ea;"></div>
<div class="r" style="left:736.00px;top:373.84px;width:1.00px;height:46.67px;background:#e9e9ea;"></div>
<div class="r" style="left:883.80px;top:373.84px;width:1.00px;height:46.67px;background:#e9e9ea;"></div>
<div class="r" style="left:1032.00px;top:373.84px;width:1.00px;height:46.67px;background:#e9e9ea;"></div>
<div class="r" style="left:1180.00px;top:373.84px;width:1.00px;height:46.67px;background:#e9e9ea;"></div>
<div class="r" style="left:1328.10px;top:373.84px;width:1.00px;height:46.67px;background:#e9e9ea;"></div>
<div class="r" style="left:1475.90px;top:373.84px;width:1.00px;height:46.67px;background:#e9e9ea;"></div>
<div class="r" style="left:144.80px;top:373.84px;width:1.00px;height:28.00px;background:#e9e9ea;"></div>
<div class="r" style="left:20.70px;top:385.04px;width:24.10px;height:24.00px;background:#fff;border:1px solid #dddfe2;border-radius:6px;"></div>
<div class="r" style="left:83.00px;top:377.84px;width:36.50px;height:21.00px;background:#e7effc;border:1px solid #d4dcea;border-radius:11px;"></div>
<div class="r" style="left:99.60px;top:378.04px;width:20.40px;height:20.40px;background:#1877f2;border-radius:50%;"></div>
<div class="t" style="top:378.48px;font-size:14.98px;line-height:18.73px;font-weight:400;color:#1c1e21;transform:scaleX(0.9346);left:486.50px;transform-origin:0 50%;">13 Aug 2023, 04:<span style="letter-spacing:-1.1px">...</span></div>
<div class="t" style="top:400.17px;font-size:12.84px;line-height:16.05px;font-weight:400;color:#86898d;transform:scaleX(0.9346);left:486.50px;transform-origin:0 50%;">31 days ago</div>
<div class="t" style="top:378.48px;font-size:14.98px;line-height:18.73px;font-weight:400;color:#1c1e21;transform:scaleX(0.9346);left:626.80px;transform-origin:0 50%;">7-day click or <span style="letter-spacing:-1.1px">...</span></div>
<div class="t" style="top:378.48px;font-size:14.98px;line-height:18.73px;font-weight:400;color:#1c1e21;transform:scaleX(0.9346);right:743.00px;text-align:right;transform-origin:100% 50%;">266</div>
<div class="r" style="left:833.64px;top:394.44px;width:23.36px;height:1.40px;background:transparent;background-image:radial-gradient(circle,#1c1e21 0.75px,transparent 0.95px);background-size:3px 1.4px;background-repeat:repeat-x;"></div>
<div class="t" style="top:380.68px;font-size:9.63px;line-height:12.04px;font-weight:400;color:#3a3b3e;transform:scaleX(0.9346);left:862.00px;transform-origin:0 50%;">[2]</div>
<div class="t" style="top:400.17px;font-size:12.84px;line-height:16.05px;font-weight:400;color:#86898d;transform:scaleX(0.9346);right:742.60px;text-align:right;transform-origin:100% 50%;">Website leads</div>
<div class="t" style="top:378.48px;font-size:14.98px;line-height:18.73px;font-weight:400;color:#1c1e21;transform:scaleX(0.9346);right:580.50px;text-align:right;transform-origin:100% 50%;">15,063</div>
<div class="t" style="top:378.48px;font-size:14.98px;line-height:18.73px;font-weight:400;color:#1c1e21;transform:scaleX(0.9346);right:432.40px;text-align:right;transform-origin:100% 50%;">19,142</div>
<div class="t" style="top:378.48px;font-size:14.98px;line-height:18.73px;font-weight:400;color:#1c1e21;transform:scaleX(0.9346);right:298.70px;text-align:right;transform-origin:100% 50%;">$1.72</div>
<div class="r" style="left:1266.27px;top:394.44px;width:35.03px;height:1.40px;background:transparent;background-image:radial-gradient(circle,#1c1e21 0.75px,transparent 0.95px);background-size:3px 1.4px;background-repeat:repeat-x;"></div>
<div class="t" style="top:380.68px;font-size:9.63px;line-height:12.04px;font-weight:400;color:#3a3b3e;transform:scaleX(0.9346);left:1306.30px;transform-origin:0 50%;">[2]</div>
<div class="t" style="top:400.17px;font-size:12.84px;line-height:16.05px;font-weight:400;color:#86898d;transform:scaleX(0.9346);right:298.70px;text-align:right;transform-origin:100% 50%;">Per Lead</div>
<div class="t" style="top:378.48px;font-size:14.98px;line-height:18.73px;font-weight:400;color:#1c1e21;transform:scaleX(0.9346);right:136.00px;text-align:right;transform-origin:100% 50%;">$458.71</div>
<div class="t" style="top:379.86px;font-size:13.05px;line-height:16.32px;font-weight:400;color:#1c1e21;transform:scaleX(0.9346);right:22.00px;text-align:right;transform-origin:100% 50%;">22 Aug 2023</div>
<div class="r" style="left:56.80px;top:420.51px;width:1.00px;height:46.67px;background:#e9e9ea;"></div>
<div class="r" style="left:469.70px;top:420.51px;width:1.00px;height:46.67px;background:#e9e9ea;"></div>
<div class="r" style="left:473.30px;top:420.51px;width:1.00px;height:46.67px;background:#e9e9ea;"></div>
<div class="r" style="left:614.00px;top:420.51px;width:1.00px;height:46.67px;background:#e9e9ea;"></div>
<div class="r" style="left:736.00px;top:420.51px;width:1.00px;height:46.67px;background:#e9e9ea;"></div>
<div class="r" style="left:883.80px;top:420.51px;width:1.00px;height:46.67px;background:#e9e9ea;"></div>
<div class="r" style="left:1032.00px;top:420.51px;width:1.00px;height:46.67px;background:#e9e9ea;"></div>
<div class="r" style="left:1180.00px;top:420.51px;width:1.00px;height:46.67px;background:#e9e9ea;"></div>
<div class="r" style="left:1328.10px;top:420.51px;width:1.00px;height:46.67px;background:#e9e9ea;"></div>
<div class="r" style="left:1475.90px;top:420.51px;width:1.00px;height:46.67px;background:#e9e9ea;"></div>
<div class="r" style="left:144.80px;top:420.51px;width:1.00px;height:28.00px;background:#e9e9ea;"></div>
<div class="r" style="left:20.70px;top:431.71px;width:24.10px;height:24.00px;background:#fff;border:1px solid #dddfe2;border-radius:6px;"></div>
<div class="r" style="left:83.00px;top:424.51px;width:36.50px;height:21.00px;background:#e7effc;border:1px solid #d4dcea;border-radius:11px;"></div>
<div class="r" style="left:99.60px;top:424.71px;width:20.40px;height:20.40px;background:#1877f2;border-radius:50%;"></div>
<div class="t" style="top:425.15px;font-size:14.98px;line-height:18.73px;font-weight:400;color:#1c1e21;transform:scaleX(0.9346);left:486.50px;transform-origin:0 50%;">13 Aug 2023, 04:<span style="letter-spacing:-1.1px">...</span></div>
<div class="t" style="top:446.84px;font-size:12.84px;line-height:16.05px;font-weight:400;color:#86898d;transform:scaleX(0.9346);left:486.50px;transform-origin:0 50%;">31 days ago</div>
<div class="t" style="top:425.15px;font-size:14.98px;line-height:18.73px;font-weight:400;color:#1c1e21;transform:scaleX(0.9346);left:626.80px;transform-origin:0 50%;">7-day click or <span style="letter-spacing:-1.1px">...</span></div>
<div class="t" style="top:425.15px;font-size:14.98px;line-height:18.73px;font-weight:400;color:#1c1e21;transform:scaleX(0.9346);right:743.00px;text-align:right;transform-origin:100% 50%;">261</div>
<div class="r" style="left:833.64px;top:441.11px;width:23.36px;height:1.40px;background:transparent;background-image:radial-gradient(circle,#1c1e21 0.75px,transparent 0.95px);background-size:3px 1.4px;background-repeat:repeat-x;"></div>
<div class="t" style="top:427.35px;font-size:9.63px;line-height:12.04px;font-weight:400;color:#3a3b3e;transform:scaleX(0.9346);left:862.00px;transform-origin:0 50%;">[2]</div>
<div class="t" style="top:446.84px;font-size:12.84px;line-height:16.05px;font-weight:400;color:#86898d;transform:scaleX(0.9346);right:742.60px;text-align:right;transform-origin:100% 50%;">Website leads</div>
<div class="t" style="top:425.15px;font-size:14.98px;line-height:18.73px;font-weight:400;color:#1c1e21;transform:scaleX(0.9346);right:580.50px;text-align:right;transform-origin:100% 50%;">14,968</div>
<div class="t" style="top:425.15px;font-size:14.98px;line-height:18.73px;font-weight:400;color:#1c1e21;transform:scaleX(0.9346);right:432.40px;text-align:right;transform-origin:100% 50%;">19,288</div>
<div class="t" style="top:425.15px;font-size:14.98px;line-height:18.73px;font-weight:400;color:#1c1e21;transform:scaleX(0.9346);right:298.70px;text-align:right;transform-origin:100% 50%;">$1.76</div>
<div class="r" style="left:1266.27px;top:441.11px;width:35.03px;height:1.40px;background:transparent;background-image:radial-gradient(circle,#1c1e21 0.75px,transparent 0.95px);background-size:3px 1.4px;background-repeat:repeat-x;"></div>
<div class="t" style="top:427.35px;font-size:9.63px;line-height:12.04px;font-weight:400;color:#3a3b3e;transform:scaleX(0.9346);left:1306.30px;transform-origin:0 50%;">[2]</div>
<div class="t" style="top:446.84px;font-size:12.84px;line-height:16.05px;font-weight:400;color:#86898d;transform:scaleX(0.9346);right:298.70px;text-align:right;transform-origin:100% 50%;">Per Lead</div>
<div class="t" style="top:425.15px;font-size:14.98px;line-height:18.73px;font-weight:400;color:#1c1e21;transform:scaleX(0.9346);right:136.00px;text-align:right;transform-origin:100% 50%;">$458.71</div>
<div class="t" style="top:426.53px;font-size:13.05px;line-height:16.32px;font-weight:400;color:#1c1e21;transform:scaleX(0.9346);right:22.00px;text-align:right;transform-origin:100% 50%;">22 Aug 2023</div>
<div class="r" style="left:8.50px;top:467.18px;width:1583.50px;height:46.67px;background:#f5f6f7;"></div>
<div class="r" style="left:56.80px;top:467.18px;width:1.00px;height:46.67px;background:#e9e9ea;"></div>
<div class="r" style="left:469.70px;top:467.18px;width:1.00px;height:46.67px;background:#e9e9ea;"></div>
<div class="r" style="left:473.30px;top:467.18px;width:1.00px;height:46.67px;background:#e9e9ea;"></div>
<div class="r" style="left:614.00px;top:467.18px;width:1.00px;height:46.67px;background:#e9e9ea;"></div>
<div class="r" style="left:736.00px;top:467.18px;width:1.00px;height:46.67px;background:#e9e9ea;"></div>
<div class="r" style="left:883.80px;top:467.18px;width:1.00px;height:46.67px;background:#e9e9ea;"></div>
<div class="r" style="left:1032.00px;top:467.18px;width:1.00px;height:46.67px;background:#e9e9ea;"></div>
<div class="r" style="left:1180.00px;top:467.18px;width:1.00px;height:46.67px;background:#e9e9ea;"></div>
<div class="r" style="left:1328.10px;top:467.18px;width:1.00px;height:46.67px;background:#e9e9ea;"></div>
<div class="r" style="left:1475.90px;top:467.18px;width:1.00px;height:46.67px;background:#e9e9ea;"></div>
<div class="r" style="left:144.80px;top:467.18px;width:1.00px;height:28.00px;background:#e9e9ea;"></div>
<div class="r" style="left:20.70px;top:478.38px;width:24.10px;height:24.00px;background:#fff;border:1px solid #dddfe2;border-radius:6px;"></div>
<div class="r" style="left:83.00px;top:471.18px;width:36.50px;height:21.00px;background:#e7effc;border:1px solid #d4dcea;border-radius:11px;"></div>
<div class="r" style="left:99.60px;top:471.38px;width:20.40px;height:20.40px;background:#1877f2;border-radius:50%;"></div>
<div class="t" style="top:471.82px;font-size:14.98px;line-height:18.73px;font-weight:400;color:#1c1e21;transform:scaleX(0.9346);left:486.50px;transform-origin:0 50%;">13 Aug 2023, 04:<span style="letter-spacing:-1.1px">...</span></div>
<div class="t" style="top:493.51px;font-size:12.84px;line-height:16.05px;font-weight:400;color:#86898d;transform:scaleX(0.9346);left:486.50px;transform-origin:0 50%;">31 days ago</div>
<div class="t" style="top:471.82px;font-size:14.98px;line-height:18.73px;font-weight:400;color:#1c1e21;transform:scaleX(0.9346);left:626.80px;transform-origin:0 50%;">7-day click or <span style="letter-spacing:-1.1px">...</span></div>
<div class="t" style="top:471.82px;font-size:14.98px;line-height:18.73px;font-weight:400;color:#1c1e21;transform:scaleX(0.9346);right:743.00px;text-align:right;transform-origin:100% 50%;">259</div>
<div class="r" style="left:833.64px;top:487.78px;width:23.36px;height:1.40px;background:transparent;background-image:radial-gradient(circle,#1c1e21 0.75px,transparent 0.95px);background-size:3px 1.4px;background-repeat:repeat-x;"></div>
<div class="t" style="top:474.02px;font-size:9.63px;line-height:12.04px;font-weight:400;color:#3a3b3e;transform:scaleX(0.9346);left:862.00px;transform-origin:0 50%;">[2]</div>
<div class="t" style="top:493.51px;font-size:12.84px;line-height:16.05px;font-weight:400;color:#86898d;transform:scaleX(0.9346);right:742.60px;text-align:right;transform-origin:100% 50%;">Website leads</div>
<div class="t" style="top:471.82px;font-size:14.98px;line-height:18.73px;font-weight:400;color:#1c1e21;transform:scaleX(0.9346);right:580.50px;text-align:right;transform-origin:100% 50%;">14,412</div>
<div class="t" style="top:471.82px;font-size:14.98px;line-height:18.73px;font-weight:400;color:#1c1e21;transform:scaleX(0.9346);right:432.40px;text-align:right;transform-origin:100% 50%;">18,510</div>
<div class="t" style="top:471.82px;font-size:14.98px;line-height:18.73px;font-weight:400;color:#1c1e21;transform:scaleX(0.9346);right:298.70px;text-align:right;transform-origin:100% 50%;">$1.77</div>
<div class="r" style="left:1266.27px;top:487.78px;width:35.03px;height:1.40px;background:transparent;background-image:radial-gradient(circle,#1c1e21 0.75px,transparent 0.95px);background-size:3px 1.4px;background-repeat:repeat-x;"></div>
<div class="t" style="top:474.02px;font-size:9.63px;line-height:12.04px;font-weight:400;color:#3a3b3e;transform:scaleX(0.9346);left:1306.30px;transform-origin:0 50%;">[2]</div>
<div class="t" style="top:493.51px;font-size:12.84px;line-height:16.05px;font-weight:400;color:#86898d;transform:scaleX(0.9346);right:298.70px;text-align:right;transform-origin:100% 50%;">Per Lead</div>
<div class="t" style="top:471.82px;font-size:14.98px;line-height:18.73px;font-weight:400;color:#1c1e21;transform:scaleX(0.9346);right:136.00px;text-align:right;transform-origin:100% 50%;">$458.71</div>
<div class="t" style="top:473.20px;font-size:13.05px;line-height:16.32px;font-weight:400;color:#1c1e21;transform:scaleX(0.9346);right:22.00px;text-align:right;transform-origin:100% 50%;">22 Aug 2023</div>
<div class="r" style="left:56.80px;top:513.85px;width:1.00px;height:46.67px;background:#e9e9ea;"></div>
<div class="r" style="left:469.70px;top:513.85px;width:1.00px;height:46.67px;background:#e9e9ea;"></div>
<div class="r" style="left:473.30px;top:513.85px;width:1.00px;height:46.67px;background:#e9e9ea;"></div>
<div class="r" style="left:614.00px;top:513.85px;width:1.00px;height:46.67px;background:#e9e9ea;"></div>
<div class="r" style="left:736.00px;top:513.85px;width:1.00px;height:46.67px;background:#e9e9ea;"></div>
<div class="r" style="left:883.80px;top:513.85px;width:1.00px;height:46.67px;background:#e9e9ea;"></div>
<div class="r" style="left:1032.00px;top:513.85px;width:1.00px;height:46.67px;background:#e9e9ea;"></div>
<div class="r" style="left:1180.00px;top:513.85px;width:1.00px;height:46.67px;background:#e9e9ea;"></div>
<div class="r" style="left:1328.10px;top:513.85px;width:1.00px;height:46.67px;background:#e9e9ea;"></div>
<div class="r" style="left:1475.90px;top:513.85px;width:1.00px;height:46.67px;background:#e9e9ea;"></div>
<div class="r" style="left:144.80px;top:513.85px;width:1.00px;height:28.00px;background:#e9e9ea;"></div>
<div class="r" style="left:20.70px;top:525.05px;width:24.10px;height:24.00px;background:#fff;border:1px solid #dddfe2;border-radius:6px;"></div>
<div class="r" style="left:83.00px;top:517.85px;width:36.50px;height:21.00px;background:#e7effc;border:1px solid #d4dcea;border-radius:11px;"></div>
<div class="r" style="left:99.60px;top:518.05px;width:20.40px;height:20.40px;background:#1877f2;border-radius:50%;"></div>
<div class="t" style="top:518.49px;font-size:14.98px;line-height:18.73px;font-weight:400;color:#1c1e21;transform:scaleX(0.9346);left:486.50px;transform-origin:0 50%;">9 Aug 2023, 03:14</div>
<div class="t" style="top:540.18px;font-size:12.84px;line-height:16.05px;font-weight:400;color:#86898d;transform:scaleX(0.9346);left:486.50px;transform-origin:0 50%;">35 days ago</div>
<div class="t" style="top:518.49px;font-size:14.98px;line-height:18.73px;font-weight:400;color:#1c1e21;transform:scaleX(0.9346);left:626.80px;transform-origin:0 50%;">7-day click or <span style="letter-spacing:-1.1px">...</span></div>
<div class="t" style="top:518.49px;font-size:14.98px;line-height:18.73px;font-weight:400;color:#1c1e21;transform:scaleX(0.9346);right:743.00px;text-align:right;transform-origin:100% 50%;">428</div>
<div class="r" style="left:833.64px;top:534.45px;width:23.36px;height:1.40px;background:transparent;background-image:radial-gradient(circle,#1c1e21 0.75px,transparent 0.95px);background-size:3px 1.4px;background-repeat:repeat-x;"></div>
<div class="t" style="top:520.69px;font-size:9.63px;line-height:12.04px;font-weight:400;color:#3a3b3e;transform:scaleX(0.9346);left:862.00px;transform-origin:0 50%;">[2]</div>
<div class="t" style="top:540.18px;font-size:12.84px;line-height:16.05px;font-weight:400;color:#86898d;transform:scaleX(0.9346);right:742.60px;text-align:right;transform-origin:100% 50%;">Website leads</div>
<div class="t" style="top:518.49px;font-size:14.98px;line-height:18.73px;font-weight:400;color:#1c1e21;transform:scaleX(0.9346);right:580.50px;text-align:right;transform-origin:100% 50%;">21,463</div>
<div class="t" style="top:518.49px;font-size:14.98px;line-height:18.73px;font-weight:400;color:#1c1e21;transform:scaleX(0.9346);right:432.40px;text-align:right;transform-origin:100% 50%;">29,145</div>
<div class="t" style="top:518.49px;font-size:14.98px;line-height:18.73px;font-weight:400;color:#1c1e21;transform:scaleX(0.9346);right:298.70px;text-align:right;transform-origin:100% 50%;">$1.55</div>
<div class="r" style="left:1266.27px;top:534.45px;width:35.03px;height:1.40px;background:transparent;background-image:radial-gradient(circle,#1c1e21 0.75px,transparent 0.95px);background-size:3px 1.4px;background-repeat:repeat-x;"></div>
<div class="t" style="top:520.69px;font-size:9.63px;line-height:12.04px;font-weight:400;color:#3a3b3e;transform:scaleX(0.9346);left:1306.30px;transform-origin:0 50%;">[2]</div>
<div class="t" style="top:540.18px;font-size:12.84px;line-height:16.05px;font-weight:400;color:#86898d;transform:scaleX(0.9346);right:298.70px;text-align:right;transform-origin:100% 50%;">Per Lead</div>
<div class="t" style="top:518.49px;font-size:14.98px;line-height:18.73px;font-weight:400;color:#1c1e21;transform:scaleX(0.9346);right:136.00px;text-align:right;transform-origin:100% 50%;">$662.09</div>
<div class="t" style="top:519.87px;font-size:13.05px;line-height:16.32px;font-weight:400;color:#1c1e21;transform:scaleX(0.9346);right:22.00px;text-align:right;transform-origin:100% 50%;">22 Aug 2023</div>
<div class="r" style="left:8.50px;top:560.52px;width:1583.50px;height:46.67px;background:#f5f6f7;"></div>
<div class="r" style="left:56.80px;top:560.52px;width:1.00px;height:46.67px;background:#e9e9ea;"></div>
<div class="r" style="left:469.70px;top:560.52px;width:1.00px;height:46.67px;background:#e9e9ea;"></div>
<div class="r" style="left:473.30px;top:560.52px;width:1.00px;height:46.67px;background:#e9e9ea;"></div>
<div class="r" style="left:614.00px;top:560.52px;width:1.00px;height:46.67px;background:#e9e9ea;"></div>
<div class="r" style="left:736.00px;top:560.52px;width:1.00px;height:46.67px;background:#e9e9ea;"></div>
<div class="r" style="left:883.80px;top:560.52px;width:1.00px;height:46.67px;background:#e9e9ea;"></div>
<div class="r" style="left:1032.00px;top:560.52px;width:1.00px;height:46.67px;background:#e9e9ea;"></div>
<div class="r" style="left:1180.00px;top:560.52px;width:1.00px;height:46.67px;background:#e9e9ea;"></div>
<div class="r" style="left:1328.10px;top:560.52px;width:1.00px;height:46.67px;background:#e9e9ea;"></div>
<div class="r" style="left:1475.90px;top:560.52px;width:1.00px;height:46.67px;background:#e9e9ea;"></div>
<div class="r" style="left:144.80px;top:560.52px;width:1.00px;height:28.00px;background:#e9e9ea;"></div>
<div class="r" style="left:20.70px;top:571.72px;width:24.10px;height:24.00px;background:#fff;border:1px solid #dddfe2;border-radius:6px;"></div>
<div class="r" style="left:83.00px;top:564.52px;width:36.50px;height:21.00px;background:#e7effc;border:1px solid #d4dcea;border-radius:11px;"></div>
<div class="r" style="left:99.60px;top:564.72px;width:20.40px;height:20.40px;background:#1877f2;border-radius:50%;"></div>
<div class="t" style="top:565.16px;font-size:14.98px;line-height:18.73px;font-weight:400;color:#1c1e21;transform:scaleX(0.9346);left:486.50px;transform-origin:0 50%;">9 Aug 2023, 03:13</div>
<div class="t" style="top:586.85px;font-size:12.84px;line-height:16.05px;font-weight:400;color:#86898d;transform:scaleX(0.9346);left:486.50px;transform-origin:0 50%;">35 days ago</div>
<div class="t" style="top:565.16px;font-size:14.98px;line-height:18.73px;font-weight:400;color:#1c1e21;transform:scaleX(0.9346);left:626.80px;transform-origin:0 50%;">7-day click or <span style="letter-spacing:-1.1px">...</span></div>
<div class="t" style="top:565.16px;font-size:14.98px;line-height:18.73px;font-weight:400;color:#1c1e21;transform:scaleX(0.9346);right:743.00px;text-align:right;transform-origin:100% 50%;">398</div>
<div class="r" style="left:833.64px;top:581.12px;width:23.36px;height:1.40px;background:transparent;background-image:radial-gradient(circle,#1c1e21 0.75px,transparent 0.95px);background-size:3px 1.4px;background-repeat:repeat-x;"></div>
<div class="t" style="top:567.36px;font-size:9.63px;line-height:12.04px;font-weight:400;color:#3a3b3e;transform:scaleX(0.9346);left:862.00px;transform-origin:0 50%;">[2]</div>
<div class="t" style="top:586.85px;font-size:12.84px;line-height:16.05px;font-weight:400;color:#86898d;transform:scaleX(0.9346);right:742.60px;text-align:right;transform-origin:100% 50%;">Website leads</div>
<div class="t" style="top:565.16px;font-size:14.98px;line-height:18.73px;font-weight:400;color:#1c1e21;transform:scaleX(0.9346);right:580.50px;text-align:right;transform-origin:100% 50%;">21,416</div>
<div class="t" style="top:565.16px;font-size:14.98px;line-height:18.73px;font-weight:400;color:#1c1e21;transform:scaleX(0.9346);right:432.40px;text-align:right;transform-origin:100% 50%;">28,518</div>
<div class="t" style="top:565.16px;font-size:14.98px;line-height:18.73px;font-weight:400;color:#1c1e21;transform:scaleX(0.9346);right:298.70px;text-align:right;transform-origin:100% 50%;">$1.66</div>
<div class="r" style="left:1266.27px;top:581.12px;width:35.03px;height:1.40px;background:transparent;background-image:radial-gradient(circle,#1c1e21 0.75px,transparent 0.95px);background-size:3px 1.4px;background-repeat:repeat-x;"></div>
<div class="t" style="top:567.36px;font-size:9.63px;line-height:12.04px;font-weight:400;color:#3a3b3e;transform:scaleX(0.9346);left:1306.30px;transform-origin:0 50%;">[2]</div>
<div class="t" style="top:586.85px;font-size:12.84px;line-height:16.05px;font-weight:400;color:#86898d;transform:scaleX(0.9346);right:298.70px;text-align:right;transform-origin:100% 50%;">Per Lead</div>
<div class="t" style="top:565.16px;font-size:14.98px;line-height:18.73px;font-weight:400;color:#1c1e21;transform:scaleX(0.9346);right:136.00px;text-align:right;transform-origin:100% 50%;">$662.07</div>
<div class="t" style="top:566.54px;font-size:13.05px;line-height:16.32px;font-weight:400;color:#1c1e21;transform:scaleX(0.9346);right:22.00px;text-align:right;transform-origin:100% 50%;">22 Aug 2023</div>
<div class="r" style="left:56.80px;top:607.19px;width:1.00px;height:46.67px;background:#e9e9ea;"></div>
<div class="r" style="left:469.70px;top:607.19px;width:1.00px;height:46.67px;background:#e9e9ea;"></div>
<div class="r" style="left:473.30px;top:607.19px;width:1.00px;height:46.67px;background:#e9e9ea;"></div>
<div class="r" style="left:614.00px;top:607.19px;width:1.00px;height:46.67px;background:#e9e9ea;"></div>
<div class="r" style="left:736.00px;top:607.19px;width:1.00px;height:46.67px;background:#e9e9ea;"></div>
<div class="r" style="left:883.80px;top:607.19px;width:1.00px;height:46.67px;background:#e9e9ea;"></div>
<div class="r" style="left:1032.00px;top:607.19px;width:1.00px;height:46.67px;background:#e9e9ea;"></div>
<div class="r" style="left:1180.00px;top:607.19px;width:1.00px;height:46.67px;background:#e9e9ea;"></div>
<div class="r" style="left:1328.10px;top:607.19px;width:1.00px;height:46.67px;background:#e9e9ea;"></div>
<div class="r" style="left:1475.90px;top:607.19px;width:1.00px;height:46.67px;background:#e9e9ea;"></div>
<div class="r" style="left:144.80px;top:607.19px;width:1.00px;height:28.00px;background:#e9e9ea;"></div>
<div class="r" style="left:20.70px;top:618.39px;width:24.10px;height:24.00px;background:#fff;border:1px solid #dddfe2;border-radius:6px;"></div>
<div class="r" style="left:83.00px;top:611.19px;width:36.50px;height:21.00px;background:#e7effc;border:1px solid #d4dcea;border-radius:11px;"></div>
<div class="r" style="left:99.60px;top:611.39px;width:20.40px;height:20.40px;background:#1877f2;border-radius:50%;"></div>
<div class="t" style="top:611.83px;font-size:14.98px;line-height:18.73px;font-weight:400;color:#1c1e21;transform:scaleX(0.9346);left:486.50px;transform-origin:0 50%;">9 Aug 2023, 03:12</div>
<div class="t" style="top:633.52px;font-size:12.84px;line-height:16.05px;font-weight:400;color:#86898d;transform:scaleX(0.9346);left:486.50px;transform-origin:0 50%;">35 days ago</div>
<div class="t" style="top:611.83px;font-size:14.98px;line-height:18.73px;font-weight:400;color:#1c1e21;transform:scaleX(0.9346);left:626.80px;transform-origin:0 50%;">7-day click or <span style="letter-spacing:-1.1px">...</span></div>
<div class="t" style="top:611.83px;font-size:14.98px;line-height:18.73px;font-weight:400;color:#1c1e21;transform:scaleX(0.9346);right:743.00px;text-align:right;transform-origin:100% 50%;">422</div>
<div class="r" style="left:833.64px;top:627.79px;width:23.36px;height:1.40px;background:transparent;background-image:radial-gradient(circle,#1c1e21 0.75px,transparent 0.95px);background-size:3px 1.4px;background-repeat:repeat-x;"></div>
<div class="t" style="top:614.03px;font-size:9.63px;line-height:12.04px;font-weight:400;color:#3a3b3e;transform:scaleX(0.9346);left:862.00px;transform-origin:0 50%;">[2]</div>
<div class="t" style="top:633.52px;font-size:12.84px;line-height:16.05px;font-weight:400;color:#86898d;transform:scaleX(0.9346);right:742.60px;text-align:right;transform-origin:100% 50%;">Website leads</div>
<div class="t" style="top:611.83px;font-size:14.98px;line-height:18.73px;font-weight:400;color:#1c1e21;transform:scaleX(0.9346);right:580.50px;text-align:right;transform-origin:100% 50%;">20,984</div>
<div class="t" style="top:611.83px;font-size:14.98px;line-height:18.73px;font-weight:400;color:#1c1e21;transform:scaleX(0.9346);right:432.40px;text-align:right;transform-origin:100% 50%;">28,178</div>
<div class="t" style="top:611.83px;font-size:14.98px;line-height:18.73px;font-weight:400;color:#1c1e21;transform:scaleX(0.9346);right:298.70px;text-align:right;transform-origin:100% 50%;">$1.57</div>
<div class="r" style="left:1266.27px;top:627.79px;width:35.03px;height:1.40px;background:transparent;background-image:radial-gradient(circle,#1c1e21 0.75px,transparent 0.95px);background-size:3px 1.4px;background-repeat:repeat-x;"></div>
<div class="t" style="top:614.03px;font-size:9.63px;line-height:12.04px;font-weight:400;color:#3a3b3e;transform:scaleX(0.9346);left:1306.30px;transform-origin:0 50%;">[2]</div>
<div class="t" style="top:633.52px;font-size:12.84px;line-height:16.05px;font-weight:400;color:#86898d;transform:scaleX(0.9346);right:298.70px;text-align:right;transform-origin:100% 50%;">Per Lead</div>
<div class="t" style="top:611.83px;font-size:14.98px;line-height:18.73px;font-weight:400;color:#1c1e21;transform:scaleX(0.9346);right:136.00px;text-align:right;transform-origin:100% 50%;">$662.10</div>
<div class="t" style="top:613.21px;font-size:13.05px;line-height:16.32px;font-weight:400;color:#1c1e21;transform:scaleX(0.9346);right:22.00px;text-align:right;transform-origin:100% 50%;">22 Aug 2023</div>
<div class="r" style="left:8.50px;top:653.86px;width:1583.50px;height:46.67px;background:#f5f6f7;"></div>
<div class="r" style="left:56.80px;top:653.86px;width:1.00px;height:46.67px;background:#e9e9ea;"></div>
<div class="r" style="left:469.70px;top:653.86px;width:1.00px;height:46.67px;background:#e9e9ea;"></div>
<div class="r" style="left:473.30px;top:653.86px;width:1.00px;height:46.67px;background:#e9e9ea;"></div>
<div class="r" style="left:614.00px;top:653.86px;width:1.00px;height:46.67px;background:#e9e9ea;"></div>
<div class="r" style="left:736.00px;top:653.86px;width:1.00px;height:46.67px;background:#e9e9ea;"></div>
<div class="r" style="left:883.80px;top:653.86px;width:1.00px;height:46.67px;background:#e9e9ea;"></div>
<div class="r" style="left:1032.00px;top:653.86px;width:1.00px;height:46.67px;background:#e9e9ea;"></div>
<div class="r" style="left:1180.00px;top:653.86px;width:1.00px;height:46.67px;background:#e9e9ea;"></div>
<div class="r" style="left:1328.10px;top:653.86px;width:1.00px;height:46.67px;background:#e9e9ea;"></div>
<div class="r" style="left:1475.90px;top:653.86px;width:1.00px;height:46.67px;background:#e9e9ea;"></div>
<div class="r" style="left:144.80px;top:653.86px;width:1.00px;height:28.00px;background:#e9e9ea;"></div>
<div class="r" style="left:20.70px;top:665.06px;width:24.10px;height:24.00px;background:#fff;border:1px solid #dddfe2;border-radius:6px;"></div>
<div class="r" style="left:83.00px;top:657.86px;width:36.50px;height:21.00px;background:#e7effc;border:1px solid #d4dcea;border-radius:11px;"></div>
<div class="r" style="left:99.60px;top:658.06px;width:20.40px;height:20.40px;background:#1877f2;border-radius:50%;"></div>
<div class="t" style="top:658.50px;font-size:14.98px;line-height:18.73px;font-weight:400;color:#1c1e21;transform:scaleX(0.9346);left:486.50px;transform-origin:0 50%;">9 Aug 2023, 03:11</div>
<div class="t" style="top:680.19px;font-size:12.84px;line-height:16.05px;font-weight:400;color:#86898d;transform:scaleX(0.9346);left:486.50px;transform-origin:0 50%;">35 days ago</div>
<div class="t" style="top:658.50px;font-size:14.98px;line-height:18.73px;font-weight:400;color:#1c1e21;transform:scaleX(0.9346);left:626.80px;transform-origin:0 50%;">7-day click or <span style="letter-spacing:-1.1px">...</span></div>
<div class="t" style="top:658.50px;font-size:14.98px;line-height:18.73px;font-weight:400;color:#1c1e21;transform:scaleX(0.9346);right:743.00px;text-align:right;transform-origin:100% 50%;">398</div>
<div class="r" style="left:833.64px;top:674.46px;width:23.36px;height:1.40px;background:transparent;background-image:radial-gradient(circle,#1c1e21 0.75px,transparent 0.95px);background-size:3px 1.4px;background-repeat:repeat-x;"></div>
<div class="t" style="top:660.70px;font-size:9.63px;line-height:12.04px;font-weight:400;color:#3a3b3e;transform:scaleX(0.9346);left:862.00px;transform-origin:0 50%;">[2]</div>
<div class="t" style="top:680.19px;font-size:12.84px;line-height:16.05px;font-weight:400;color:#86898d;transform:scaleX(0.9346);right:742.60px;text-align:right;transform-origin:100% 50%;">Website leads</div>
<div class="t" style="top:658.50px;font-size:14.98px;line-height:18.73px;font-weight:400;color:#1c1e21;transform:scaleX(0.9346);right:580.50px;text-align:right;transform-origin:100% 50%;">20,261</div>
<div class="t" style="top:658.50px;font-size:14.98px;line-height:18.73px;font-weight:400;color:#1c1e21;transform:scaleX(0.9346);right:432.40px;text-align:right;transform-origin:100% 50%;">27,022</div>
<div class="t" style="top:658.50px;font-size:14.98px;line-height:18.73px;font-weight:400;color:#1c1e21;transform:scaleX(0.9346);right:298.70px;text-align:right;transform-origin:100% 50%;">$1.66</div>
<div class="r" style="left:1266.27px;top:674.46px;width:35.03px;height:1.40px;background:transparent;background-image:radial-gradient(circle,#1c1e21 0.75px,transparent 0.95px);background-size:3px 1.4px;background-repeat:repeat-x;"></div>
<div class="t" style="top:660.70px;font-size:9.63px;line-height:12.04px;font-weight:400;color:#3a3b3e;transform:scaleX(0.9346);left:1306.30px;transform-origin:0 50%;">[2]</div>
<div class="t" style="top:680.19px;font-size:12.84px;line-height:16.05px;font-weight:400;color:#86898d;transform:scaleX(0.9346);right:298.70px;text-align:right;transform-origin:100% 50%;">Per Lead</div>
<div class="t" style="top:658.50px;font-size:14.98px;line-height:18.73px;font-weight:400;color:#1c1e21;transform:scaleX(0.9346);right:136.00px;text-align:right;transform-origin:100% 50%;">$662.14</div>
<div class="t" style="top:659.88px;font-size:13.05px;line-height:16.32px;font-weight:400;color:#1c1e21;transform:scaleX(0.9346);right:22.00px;text-align:right;transform-origin:100% 50%;">22 Aug 2023</div>
<div class="r" style="left:56.80px;top:700.53px;width:1.00px;height:46.67px;background:#e9e9ea;"></div>
<div class="r" style="left:469.70px;top:700.53px;width:1.00px;height:46.67px;background:#e9e9ea;"></div>
<div class="r" style="left:473.30px;top:700.53px;width:1.00px;height:46.67px;background:#e9e9ea;"></div>
<div class="r" style="left:614.00px;top:700.53px;width:1.00px;height:46.67px;background:#e9e9ea;"></div>
<div class="r" style="left:736.00px;top:700.53px;width:1.00px;height:46.67px;background:#e9e9ea;"></div>
<div class="r" style="left:883.80px;top:700.53px;width:1.00px;height:46.67px;background:#e9e9ea;"></div>
<div class="r" style="left:1032.00px;top:700.53px;width:1.00px;height:46.67px;background:#e9e9ea;"></div>
<div class="r" style="left:1180.00px;top:700.53px;width:1.00px;height:46.67px;background:#e9e9ea;"></div>
<div class="r" style="left:1328.10px;top:700.53px;width:1.00px;height:46.67px;background:#e9e9ea;"></div>
<div class="r" style="left:1475.90px;top:700.53px;width:1.00px;height:46.67px;background:#e9e9ea;"></div>
<div class="r" style="left:144.80px;top:700.53px;width:1.00px;height:28.00px;background:#e9e9ea;"></div>
<div class="r" style="left:20.70px;top:711.73px;width:24.10px;height:24.00px;background:#fff;border:1px solid #dddfe2;border-radius:6px;"></div>
<div class="r" style="left:83.00px;top:704.53px;width:36.50px;height:21.00px;background:#e7effc;border:1px solid #d4dcea;border-radius:11px;"></div>
<div class="r" style="left:99.60px;top:704.73px;width:20.40px;height:20.40px;background:#1877f2;border-radius:50%;"></div>
<div class="t" style="top:705.17px;font-size:14.98px;line-height:18.73px;font-weight:400;color:#1c1e21;transform:scaleX(0.9346);left:486.50px;transform-origin:0 50%;">9 Aug 2023, 03:09</div>
<div class="t" style="top:726.86px;font-size:12.84px;line-height:16.05px;font-weight:400;color:#86898d;transform:scaleX(0.9346);left:486.50px;transform-origin:0 50%;">35 days ago</div>
<div class="t" style="top:705.17px;font-size:14.98px;line-height:18.73px;font-weight:400;color:#1c1e21;transform:scaleX(0.9346);left:626.80px;transform-origin:0 50%;">7-day click or <span style="letter-spacing:-1.1px">...</span></div>
<div class="t" style="top:705.17px;font-size:14.98px;line-height:18.73px;font-weight:400;color:#1c1e21;transform:scaleX(0.9346);right:743.00px;text-align:right;transform-origin:100% 50%;">422</div>
<div class="r" style="left:833.64px;top:721.13px;width:23.36px;height:1.40px;background:transparent;background-image:radial-gradient(circle,#1c1e21 0.75px,transparent 0.95px);background-size:3px 1.4px;background-repeat:repeat-x;"></div>
<div class="t" style="top:707.37px;font-size:9.63px;line-height:12.04px;font-weight:400;color:#3a3b3e;transform:scaleX(0.9346);left:862.00px;transform-origin:0 50%;">[2]</div>
<div class="t" style="top:726.86px;font-size:12.84px;line-height:16.05px;font-weight:400;color:#86898d;transform:scaleX(0.9346);right:742.60px;text-align:right;transform-origin:100% 50%;">Website leads</div>
<div class="t" style="top:705.17px;font-size:14.98px;line-height:18.73px;font-weight:400;color:#1c1e21;transform:scaleX(0.9346);right:580.50px;text-align:right;transform-origin:100% 50%;">20,472</div>
<div class="t" style="top:705.17px;font-size:14.98px;line-height:18.73px;font-weight:400;color:#1c1e21;transform:scaleX(0.9346);right:432.40px;text-align:right;transform-origin:100% 50%;">27,811</div>
<div class="t" style="top:705.17px;font-size:14.98px;line-height:18.73px;font-weight:400;color:#1c1e21;transform:scaleX(0.9346);right:298.70px;text-align:right;transform-origin:100% 50%;">$1.57</div>
<div class="r" style="left:1266.27px;top:721.13px;width:35.03px;height:1.40px;background:transparent;background-image:radial-gradient(circle,#1c1e21 0.75px,transparent 0.95px);background-size:3px 1.4px;background-repeat:repeat-x;"></div>
<div class="t" style="top:707.37px;font-size:9.63px;line-height:12.04px;font-weight:400;color:#3a3b3e;transform:scaleX(0.9346);left:1306.30px;transform-origin:0 50%;">[2]</div>
<div class="t" style="top:726.86px;font-size:12.84px;line-height:16.05px;font-weight:400;color:#86898d;transform:scaleX(0.9346);right:298.70px;text-align:right;transform-origin:100% 50%;">Per Lead</div>
<div class="t" style="top:705.17px;font-size:14.98px;line-height:18.73px;font-weight:400;color:#1c1e21;transform:scaleX(0.9346);right:136.00px;text-align:right;transform-origin:100% 50%;">$662.22</div>
<div class="t" style="top:706.55px;font-size:13.05px;line-height:16.32px;font-weight:400;color:#1c1e21;transform:scaleX(0.9346);right:22.00px;text-align:right;transform-origin:100% 50%;">22 Aug 2023</div>
<div class="r" style="left:8.50px;top:747.20px;width:1583.50px;height:46.67px;background:#f0f0f0;"></div>
<div class="r" style="left:56.80px;top:747.20px;width:1.00px;height:46.67px;background:#e9e9ea;"></div>
<div class="r" style="left:469.70px;top:747.20px;width:1.00px;height:46.67px;background:#e9e9ea;"></div>
<div class="r" style="left:473.30px;top:747.20px;width:1.00px;height:46.67px;background:#e9e9ea;"></div>
<div class="r" style="left:614.00px;top:747.20px;width:1.00px;height:46.67px;background:#e9e9ea;"></div>
<div class="r" style="left:736.00px;top:747.20px;width:1.00px;height:46.67px;background:#e9e9ea;"></div>
<div class="r" style="left:883.80px;top:747.20px;width:1.00px;height:46.67px;background:#e9e9ea;"></div>
<div class="r" style="left:1032.00px;top:747.20px;width:1.00px;height:46.67px;background:#e9e9ea;"></div>
<div class="r" style="left:1180.00px;top:747.20px;width:1.00px;height:46.67px;background:#e9e9ea;"></div>
<div class="r" style="left:1328.10px;top:747.20px;width:1.00px;height:46.67px;background:#e9e9ea;"></div>
<div class="r" style="left:1475.90px;top:747.20px;width:1.00px;height:46.67px;background:#e9e9ea;"></div>
<div class="r" style="left:144.80px;top:747.20px;width:1.00px;height:28.00px;background:#e9e9ea;"></div>
<div class="r" style="left:20.70px;top:758.40px;width:24.10px;height:24.00px;background:#fff;border:1px solid #dddfe2;border-radius:6px;"></div>
<div class="r" style="left:83.00px;top:751.20px;width:36.50px;height:21.00px;background:#e7effc;border:1px solid #d4dcea;border-radius:11px;"></div>
<div class="r" style="left:99.60px;top:751.40px;width:20.40px;height:20.40px;background:#1877f2;border-radius:50%;"></div>
<div class="t" style="top:751.84px;font-size:14.98px;line-height:18.73px;font-weight:400;color:#1c1e21;transform:scaleX(0.9346);left:486.50px;transform-origin:0 50%;">20 Aug 2023, 00:<span style="letter-spacing:-1.1px">...</span></div>
<div class="t" style="top:773.53px;font-size:12.84px;line-height:16.05px;font-weight:400;color:#86898d;transform:scaleX(0.9346);left:486.50px;transform-origin:0 50%;">24 days ago</div>
<div class="t" style="top:751.84px;font-size:14.98px;line-height:18.73px;font-weight:400;color:#1c1e21;transform:scaleX(0.9346);left:626.80px;transform-origin:0 50%;">7-day click or <span style="letter-spacing:-1.1px">...</span></div>
<div class="t" style="top:751.84px;font-size:14.98px;line-height:18.73px;font-weight:400;color:#1c1e21;transform:scaleX(0.9346);right:743.00px;text-align:right;transform-origin:100% 50%;">811</div>
<div class="r" style="left:834.68px;top:767.80px;width:22.32px;height:1.40px;background:transparent;background-image:radial-gradient(circle,#1c1e21 0.75px,transparent 0.95px);background-size:3px 1.4px;background-repeat:repeat-x;"></div>
<div class="t" style="top:754.04px;font-size:9.63px;line-height:12.04px;font-weight:400;color:#3a3b3e;transform:scaleX(0.9346);left:862.00px;transform-origin:0 50%;">[2]</div>
<div class="t" style="top:773.53px;font-size:12.84px;line-height:16.05px;font-weight:400;color:#86898d;transform:scaleX(0.9346);right:742.60px;text-align:right;transform-origin:100% 50%;">Website leads</div>
<div class="t" style="top:751.84px;font-size:14.98px;line-height:18.73px;font-weight:400;color:#1c1e21;transform:scaleX(0.9346);right:580.50px;text-align:right;transform-origin:100% 50%;">6,384</div>
<div class="t" style="top:751.84px;font-size:14.98px;line-height:18.73px;font-weight:400;color:#1c1e21;transform:scaleX(0.9346);right:432.40px;text-align:right;transform-origin:100% 50%;">30,402</div>
<div class="t" style="top:751.84px;font-size:14.98px;line-height:18.73px;font-weight:400;color:#1c1e21;transform:scaleX(0.9346);right:298.70px;text-align:right;transform-origin:100% 50%;">$1.22</div>
<div class="r" style="left:1266.27px;top:767.80px;width:35.03px;height:1.40px;background:transparent;background-image:radial-gradient(circle,#1c1e21 0.75px,transparent 0.95px);background-size:3px 1.4px;background-repeat:repeat-x;"></div>
<div class="t" style="top:754.04px;font-size:9.63px;line-height:12.04px;font-weight:400;color:#3a3b3e;transform:scaleX(0.9346);left:1306.30px;transform-origin:0 50%;">[2]</div>
<div class="t" style="top:773.53px;font-size:12.84px;line-height:16.05px;font-weight:400;color:#86898d;transform:scaleX(0.9346);right:298.70px;text-align:right;transform-origin:100% 50%;">Per Lead</div>
<div class="t" style="top:751.84px;font-size:14.98px;line-height:18.73px;font-weight:400;color:#1c1e21;transform:scaleX(0.9346);right:136.00px;text-align:right;transform-origin:100% 50%;">$991.86</div>
<div class="t" style="top:753.22px;font-size:13.05px;line-height:16.32px;font-weight:400;color:#1c1e21;transform:scaleX(0.9346);right:22.00px;text-align:right;transform-origin:100% 50%;">22 Aug 2023</div>
<svg class="r" style="left:1487.00px;top:752.00px;" width="16" height="15" viewBox="0 0 16 15"><path d="M3.8 11.4L10.2 5" stroke="#5f5f5f" stroke-width="3.3" stroke-linecap="round"/><path d="M12.1 3.8L13 2.9" stroke="#5f5f5f" stroke-width="3.1" stroke-linecap="round"/><path d="M9.2 2.9L13.1 6.8" stroke="#f0f0f0" stroke-width="1"/></svg>
<div class="r" style="left:56.80px;top:793.87px;width:1.00px;height:46.67px;background:#e9e9ea;"></div>
<div class="r" style="left:469.70px;top:793.87px;width:1.00px;height:46.67px;background:#e9e9ea;"></div>
<div class="r" style="left:473.30px;top:793.87px;width:1.00px;height:46.67px;background:#e9e9ea;"></div>
<div class="r" style="left:614.00px;top:793.87px;width:1.00px;height:46.67px;background:#e9e9ea;"></div>
<div class="r" style="left:736.00px;top:793.87px;width:1.00px;height:46.67px;background:#e9e9ea;"></div>
<div class="r" style="left:883.80px;top:793.87px;width:1.00px;height:46.67px;background:#e9e9ea;"></div>
<div class="r" style="left:1032.00px;top:793.87px;width:1.00px;height:46.67px;background:#e9e9ea;"></div>
<div class="r" style="left:1180.00px;top:793.87px;width:1.00px;height:46.67px;background:#e9e9ea;"></div>
<div class="r" style="left:1328.10px;top:793.87px;width:1.00px;height:46.67px;background:#e9e9ea;"></div>
<div class="r" style="left:1475.90px;top:793.87px;width:1.00px;height:46.67px;background:#e9e9ea;"></div>
<div class="r" style="left:144.80px;top:793.87px;width:1.00px;height:28.00px;background:#e9e9ea;"></div>
<div class="r" style="left:20.70px;top:805.07px;width:24.10px;height:24.00px;background:#fff;border:1px solid #dddfe2;border-radius:6px;"></div>
<div class="r" style="left:83.00px;top:797.87px;width:36.50px;height:21.00px;background:#e7effc;border:1px solid #d4dcea;border-radius:11px;"></div>
<div class="r" style="left:99.60px;top:798.07px;width:20.40px;height:20.40px;background:#1877f2;border-radius:50%;"></div>
<div class="t" style="top:798.51px;font-size:14.98px;line-height:18.73px;font-weight:400;color:#1c1e21;transform:scaleX(0.9346);left:486.50px;transform-origin:0 50%;">20 Aug 2023, 00:<span style="letter-spacing:-1.1px">...</span></div>
<div class="t" style="top:820.20px;font-size:12.84px;line-height:16.05px;font-weight:400;color:#86898d;transform:scaleX(0.9346);left:486.50px;transform-origin:0 50%;">24 days ago</div>
<div class="t" style="top:798.51px;font-size:14.98px;line-height:18.73px;font-weight:400;color:#1c1e21;transform:scaleX(0.9346);left:626.80px;transform-origin:0 50%;">7-day click or <span style="letter-spacing:-1.1px">...</span></div>
<div class="t" style="top:798.51px;font-size:14.98px;line-height:18.73px;font-weight:400;color:#1c1e21;transform:scaleX(0.9346);right:743.00px;text-align:right;transform-origin:100% 50%;">1,080</div>
<div class="r" style="left:821.97px;top:814.47px;width:35.03px;height:1.40px;background:transparent;background-image:radial-gradient(circle,#1c1e21 0.75px,transparent 0.95px);background-size:3px 1.4px;background-repeat:repeat-x;"></div>
<div class="t" style="top:800.71px;font-size:9.63px;line-height:12.04px;font-weight:400;color:#3a3b3e;transform:scaleX(0.9346);left:862.00px;transform-origin:0 50%;">[2]</div>
<div class="t" style="top:820.20px;font-size:12.84px;line-height:16.05px;font-weight:400;color:#86898d;transform:scaleX(0.9346);right:742.60px;text-align:right;transform-origin:100% 50%;">Website leads</div>
<div class="t" style="top:798.51px;font-size:14.98px;line-height:18.73px;font-weight:400;color:#1c1e21;transform:scaleX(0.9346);right:580.50px;text-align:right;transform-origin:100% 50%;">15,664</div>
<div class="t" style="top:798.51px;font-size:14.98px;line-height:18.73px;font-weight:400;color:#1c1e21;transform:scaleX(0.9346);right:432.40px;text-align:right;transform-origin:100% 50%;">50,960</div>
<div class="t" style="top:798.51px;font-size:14.98px;line-height:18.73px;font-weight:400;color:#1c1e21;transform:scaleX(0.9346);right:298.70px;text-align:right;transform-origin:100% 50%;">$0.92</div>
<div class="r" style="left:1266.27px;top:814.47px;width:35.03px;height:1.40px;background:transparent;background-image:radial-gradient(circle,#1c1e21 0.75px,transparent 0.95px);background-size:3px 1.4px;background-repeat:repeat-x;"></div>
<div class="t" style="top:800.71px;font-size:9.63px;line-height:12.04px;font-weight:400;color:#3a3b3e;transform:scaleX(0.9346);left:1306.30px;transform-origin:0 50%;">[2]</div>
<div class="t" style="top:820.20px;font-size:12.84px;line-height:16.05px;font-weight:400;color:#86898d;transform:scaleX(0.9346);right:298.70px;text-align:right;transform-origin:100% 50%;">Per Lead</div>
<div class="t" style="top:798.51px;font-size:14.98px;line-height:18.73px;font-weight:400;color:#1c1e21;transform:scaleX(0.9346);right:136.00px;text-align:right;transform-origin:100% 50%;">$994.15</div>
<div class="t" style="top:799.89px;font-size:13.05px;line-height:16.32px;font-weight:400;color:#1c1e21;transform:scaleX(0.9346);right:22.00px;text-align:right;transform-origin:100% 50%;">22 Aug 2023</div>
<div class="r" style="left:159.80px;top:245.30px;width:81.40px;height:2.00px;background:transparent;background-image:linear-gradient(90deg,#2a6bd6 50%,transparent 50%);background-size:3px 2px;opacity:0.8;"></div>
<div class="r" style="left:253.70px;top:245.30px;width:93.20px;height:2.00px;background:transparent;background-image:linear-gradient(90deg,#2a6bd6 50%,transparent 50%);background-size:3px 2px;opacity:0.8;"></div>
<div class="r" style="left:157.60px;top:288.50px;width:1.10px;height:11.00px;background:#8fb0e6;"></div>
<div class="r" style="left:157.60px;top:335.17px;width:1.10px;height:11.00px;background:#8fb0e6;"></div>
<div class="r" style="left:157.60px;top:381.84px;width:1.10px;height:11.00px;background:#8fb0e6;"></div>
<div class="r" style="left:157.60px;top:428.51px;width:1.10px;height:11.00px;background:#8fb0e6;"></div>
<div class="r" style="left:157.60px;top:475.18px;width:1.10px;height:11.00px;background:#8fb0e6;"></div>
<div class="r" style="left:157.60px;top:521.85px;width:1.10px;height:11.00px;background:#8fb0e6;"></div>
<div class="r" style="left:157.60px;top:568.52px;width:1.10px;height:11.00px;background:#8fb0e6;"></div>
<div class="r" style="left:157.60px;top:615.19px;width:1.10px;height:11.00px;background:#8fb0e6;"></div>
<div class="r" style="left:157.60px;top:661.86px;width:1.10px;height:11.00px;background:#8fb0e6;"></div>
<div class="r" style="left:157.60px;top:708.53px;width:1.10px;height:11.00px;background:#8fb0e6;"></div>
<div class="r" style="left:157.60px;top:755.20px;width:1.10px;height:11.00px;background:#8fb0e6;"></div>
<div class="r" style="left:157.60px;top:801.87px;width:1.10px;height:11.00px;background:#8fb0e6;"></div>
<div class="r" style="left:158.70px;top:247.00px;width:301.10px;height:567.80px;background:#ff2400;"></div>
<div class="r" style="left:8.50px;top:197.00px;width:1583.50px;height:48.00px;background:#fff;"></div>
<div class="r" style="left:8.50px;top:196.50px;width:1583.50px;height:1.00px;background:#e6e6e6;"></div>
<div class="r" style="left:8.50px;top:244.50px;width:1583.50px;height:1.00px;background:#e3e4e6;box-shadow:0 1px 4px rgba(0,0,0,0.13);"></div>
<div class="r" style="left:56.80px;top:197.00px;width:1.00px;height:48.00px;background:#e9e9ea;"></div>
<div class="r" style="left:144.80px;top:197.00px;width:1.00px;height:48.00px;background:#e9e9ea;"></div>
<div class="r" style="left:469.70px;top:197.00px;width:1.00px;height:48.00px;background:#e9e9ea;"></div>
<div class="r" style="left:473.30px;top:197.00px;width:1.00px;height:48.00px;background:#e9e9ea;"></div>
<div class="r" style="left:614.00px;top:197.00px;width:1.00px;height:48.00px;background:#e9e9ea;"></div>
<div class="r" style="left:736.00px;top:197.00px;width:1.00px;height:48.00px;background:#e9e9ea;"></div>
<div class="r" style="left:883.80px;top:197.00px;width:1.00px;height:48.00px;background:#e9e9ea;"></div>
<div class="r" style="left:1032.00px;top:197.00px;width:1.00px;height:48.00px;background:#e9e9ea;"></div>
<div class="r" style="left:1180.00px;top:197.00px;width:1.00px;height:48.00px;background:#e9e9ea;"></div>
<div class="r" style="left:1328.10px;top:197.00px;width:1.00px;height:48.00px;background:#e9e9ea;"></div>
<div class="r" style="left:1475.90px;top:197.00px;width:1.00px;height:48.00px;background:#e9e9ea;"></div>
<div class="r" style="left:470.70px;top:197.00px;width:2.60px;height:643.50px;background:#efefef;"></div>
<div class="r" style="left:21.00px;top:209.70px;width:24.00px;height:24.00px;background:#fff;border:1px solid #dddfe2;border-radius:6px;"></div>
<div class="t" style="top:211.79px;font-size:14.63px;line-height:18.29px;font-weight:700;color:#1c1e21;transform:scaleX(0.9091);left:68.50px;transform-origin:0 50%;">Off/On</div>
<div class="t" style="top:211.79px;font-size:14.63px;line-height:18.29px;font-weight:700;color:#1c1e21;transform:scaleX(0.9091);left:156.00px;transform-origin:0 50%;">Ad set</div>
<div class="t" style="top:204.19px;font-size:14.63px;line-height:18.29px;font-weight:700;color:#1c1e21;transform:scaleX(0.9091);left:484.50px;transform-origin:0 50%;">Last significant</div>
<div class="t" style="top:220.39px;font-size:14.63px;line-height:18.29px;font-weight:700;color:#1c1e21;transform:scaleX(0.9091);left:484.50px;transform-origin:0 50%;">edit</div>
<div class="t" style="top:204.19px;font-size:14.63px;line-height:18.29px;font-weight:700;color:#1c1e21;transform:scaleX(0.9091);left:626.00px;transform-origin:0 50%;">Attribution</div>
<div class="t" style="top:220.39px;font-size:14.63px;line-height:18.29px;font-weight:700;color:#1c1e21;transform:scaleX(0.9091);left:626.00px;transform-origin:0 50%;">setting</div>
<svg class="r" style="left:747.00px;top:213.70px;" width="12.4" height="12.4" viewBox="0 0 12 12"><circle cx="6" cy="6" r="6" fill="#1877f2"/><rect x="5.1" y="5" width="1.8" height="4.6" fill="#fff"/><circle cx="6" cy="3.2" r="1.05" fill="#fff"/></svg>
<div class="t" style="top:211.79px;font-size:14.63px;line-height:18.29px;font-weight:700;color:#1c1e21;transform:scaleX(0.9091);left:767.50px;transform-origin:0 50%;">Results</div>
<div class="t" style="top:211.79px;font-size:14.63px;line-height:18.29px;font-weight:700;color:#1c1e21;transform:scaleX(0.9091);left:895.00px;transform-origin:0 50%;">Reach</div>
<div class="t" style="top:211.79px;font-size:14.63px;line-height:18.29px;font-weight:700;color:#1c1e21;transform:scaleX(0.9091);left:1043.00px;transform-origin:0 50%;">Impressions</div>
<div class="t" style="top:211.79px;font-size:14.63px;line-height:18.29px;font-weight:700;color:#1c1e21;transform:scaleX(0.9091);left:1191.10px;transform-origin:0 50%;">Cost per result</div>
<div class="t" style="top:211.79px;font-size:14.63px;line-height:18.29px;font-weight:700;color:#1c1e21;transform:scaleX(0.9091);left:1339.20px;transform-origin:0 50%;">Amount spent</div>
<div class="t" style="top:211.79px;font-size:14.63px;line-height:18.29px;font-weight:700;color:#1c1e21;transform:scaleX(0.9091);left:1487.50px;transform-origin:0 50%;">Ends</div>
<svg class="r" style="left:452.80px;top:219.50px;" width="7.4" height="4.4" viewBox="0 0 7.4 4.4"><path d="M0 0H7.4L3.7 4.4Z" fill="#bcc0c4"/></svg>
<svg class="r" style="left:868.20px;top:219.50px;" width="7.4" height="4.4" viewBox="0 0 7.4 4.4"><path d="M0 0H7.4L3.7 4.4Z" fill="#bcc0c4"/></svg>
<svg class="r" style="left:1015.70px;top:219.50px;" width="7.4" height="4.4" viewBox="0 0 7.4 4.4"><path d="M0 0H7.4L3.7 4.4Z" fill="#bcc0c4"/></svg>
<svg class="r" style="left:1163.80px;top:219.50px;" width="7.4" height="4.4" viewBox="0 0 7.4 4.4"><path d="M0 0H7.4L3.7 4.4Z" fill="#bcc0c4"/></svg>
<svg class="r" style="left:1312.10px;top:219.50px;" width="7.4" height="4.4" viewBox="0 0 7.4 4.4"><path d="M0 0H7.4L3.7 4.4Z" fill="#bcc0c4"/></svg>
<svg class="r" style="left:1459.90px;top:219.50px;" width="7.4" height="4.4" viewBox="0 0 7.4 4.4"><path d="M0 0H7.4L3.7 4.4Z" fill="#bcc0c4"/></svg>
<svg class="r" style="left:1574.50px;top:219.50px;" width="7.4" height="4.4" viewBox="0 0 7.4 4.4"><path d="M0 0H7.4L3.7 4.4Z" fill="#bcc0c4"/></svg>
<div class="r" style="left:1583.90px;top:261.70px;width:6.40px;height:571.70px;background:#c1c1c1;border-radius:3.5px;"></div>
<div class="r" style="left:8.50px;top:840.00px;width:1583.50px;height:64.00px;background:#fff;"></div>
<div class="r" style="left:8.50px;top:839.80px;width:1583.50px;height:1.00px;background:#e6e6e6;"></div>
<div class="r" style="left:144.80px;top:840.50px;width:1.00px;height:63.50px;background:#e9e9ea;"></div>
<div class="r" style="left:469.70px;top:840.50px;width:1.00px;height:63.50px;background:#e9e9ea;"></div>
<div class="r" style="left:473.30px;top:840.50px;width:1.00px;height:63.50px;background:#e9e9ea;"></div>
<div class="r" style="left:614.00px;top:840.50px;width:1.00px;height:63.50px;background:#e9e9ea;"></div>
<div class="r" style="left:736.00px;top:840.50px;width:1.00px;height:63.50px;background:#e9e9ea;"></div>
<div class="r" style="left:883.80px;top:840.50px;width:1.00px;height:63.50px;background:#e9e9ea;"></div>
<div class="r" style="left:1032.00px;top:840.50px;width:1.00px;height:63.50px;background:#e9e9ea;"></div>
<div class="r" style="left:1180.00px;top:840.50px;width:1.00px;height:63.50px;background:#e9e9ea;"></div>
<div class="r" style="left:1328.10px;top:840.50px;width:1.00px;height:63.50px;background:#e9e9ea;"></div>
<div class="r" style="left:1475.90px;top:840.50px;width:1.00px;height:63.50px;background:#e9e9ea;"></div>
<div class="r" style="left:470.70px;top:840.50px;width:2.60px;height:63.50px;background:#efefef;"></div>
<div class="t" style="top:847.83px;font-size:14.79px;line-height:18.49px;font-weight:700;color:#1c1e21;transform:scaleX(0.9091);left:157.80px;transform-origin:0 50%;">Results from 13 ad sets</div>
<svg class="r" style="left:312.80px;top:850.80px;" width="12.2" height="12.2" viewBox="0 0 12 12"><circle cx="6" cy="6" r="6" fill="#444546"/><rect x="5.1" y="5" width="1.8" height="4.6" fill="#fff"/><circle cx="6" cy="3.2" r="1.05" fill="#fff"/></svg>
<div class="t" style="top:869.32px;font-size:12.95px;line-height:16.18px;font-weight:400;color:#86898d;transform:scaleX(0.9346);left:157.80px;transform-origin:0 50%;">Excludes deleted items</div>
<div class="r" style="left:484.90px;top:855.60px;width:10.10px;height:1.30px;background:#606770;"></div>
<div class="t" style="top:846.93px;font-size:14.79px;line-height:18.49px;font-weight:700;color:#1c1e21;transform:scaleX(0.9091);left:625.30px;transform-origin:0 50%;">7-day click or ...</div>
<div class="t" style="top:846.34px;font-size:15.40px;line-height:19.25px;font-weight:700;color:#1c1e21;transform:scaleX(0.9091);right:737.10px;text-align:right;transform-origin:100% 50%;">5,257</div>
<div class="r" style="left:827.87px;top:862.70px;width:35.03px;height:1.40px;background:transparent;background-image:radial-gradient(circle,#1c1e21 0.75px,transparent 0.95px);background-size:3px 1.4px;background-repeat:repeat-x;"></div>
<div class="t" style="top:850.04px;font-size:9.63px;line-height:12.04px;font-weight:400;color:#3a3b3e;transform:scaleX(0.9346);left:868.00px;transform-origin:0 50%;">[2]</div>
<div class="t" style="top:869.43px;font-size:12.84px;line-height:16.05px;font-weight:400;color:#86898d;transform:scaleX(0.9346);right:736.50px;text-align:right;transform-origin:100% 50%;">Website leads</div>
<div class="t" style="top:846.34px;font-size:15.40px;line-height:19.25px;font-weight:700;color:#1c1e21;transform:scaleX(0.9091);right:574.40px;text-align:right;transform-origin:100% 50%;">142,495</div>
<div class="t" style="top:869.43px;font-size:12.84px;line-height:16.05px;font-weight:400;color:#86898d;transform:scaleX(0.9346);right:578.20px;text-align:right;transform-origin:100% 50%;">Accounts Centre acco...</div>
<div class="t" style="top:846.34px;font-size:15.40px;line-height:19.25px;font-weight:700;color:#1c1e21;transform:scaleX(0.9091);right:426.30px;text-align:right;transform-origin:100% 50%;">341,886</div>
<div class="t" style="top:869.43px;font-size:12.84px;line-height:16.05px;font-weight:400;color:#86898d;transform:scaleX(0.9346);right:426.30px;text-align:right;transform-origin:100% 50%;">Total</div>
<div class="t" style="top:846.34px;font-size:15.40px;line-height:19.25px;font-weight:700;color:#1c1e21;transform:scaleX(0.9091);right:292.20px;text-align:right;transform-origin:100% 50%;">$1.46</div>
<div class="r" style="left:1272.77px;top:862.70px;width:35.03px;height:1.40px;background:transparent;background-image:radial-gradient(circle,#1c1e21 0.75px,transparent 0.95px);background-size:3px 1.4px;background-repeat:repeat-x;"></div>
<div class="t" style="top:850.04px;font-size:9.63px;line-height:12.04px;font-weight:400;color:#3a3b3e;transform:scaleX(0.9346);left:1312.30px;transform-origin:0 50%;">[2]</div>
<div class="t" style="top:869.43px;font-size:12.84px;line-height:16.05px;font-weight:400;color:#86898d;transform:scaleX(0.9346);right:292.20px;text-align:right;transform-origin:100% 50%;">Per Lead</div>
<div class="t" style="top:846.34px;font-size:15.40px;line-height:19.25px;font-weight:700;color:#1c1e21;transform:scaleX(0.9091);right:130.30px;text-align:right;transform-origin:100% 50%;">$7,671.33</div>
<div class="t" style="top:869.43px;font-size:12.84px;line-height:16.05px;font-weight:400;color:#86898d;transform:scaleX(0.9346);right:130.30px;text-align:right;transform-origin:100% 50%;">Total Spent</div>
<div class="r" style="left:766.00px;top:834.70px;width:721.10px;height:63.90px;background:transparent;border:8.3px solid #ff2400;"></div>
<svg class="r" style="left:627.00px;top:841.00px;" width="118" height="43" viewBox="0 0 118 43"><path d="M0.8 17.9H75.8V0.6L117.4 21.3L75.8 42.2V25.4H0.8Z" fill="#ff2400"/></svg>
</body></html>
